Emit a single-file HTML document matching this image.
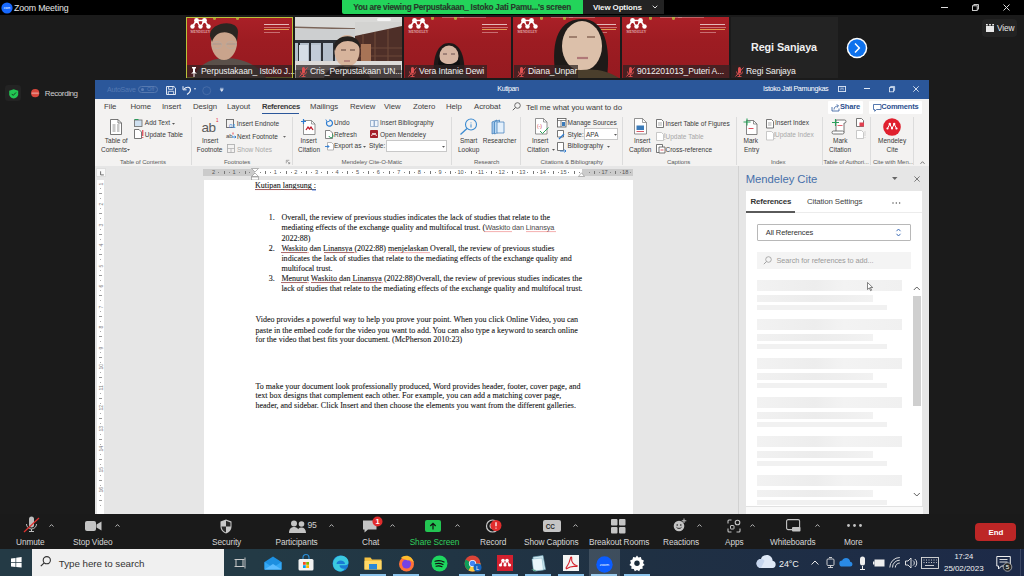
<!DOCTYPE html>
<html><head><meta charset="utf-8">
<style>
*{margin:0;padding:0;box-sizing:border-box}
html,body{width:1024px;height:576px;overflow:hidden;background:#1b1b1b;font-family:"Liberation Sans",sans-serif;position:relative}
.a{position:absolute}
.t{position:absolute;white-space:nowrap}
svg{overflow:visible}
</style></head><body>
<div class="a" style="left:0px;top:0px;width:1024px;height:15px;background:#000;"></div>
<svg class="a" style="left:0.5px;top:1.5px" width="12" height="12" viewBox="0 0 12 12"><circle cx="6" cy="6" r="5.6" fill="#1769ff"/><text x="6" y="7" font-size="2.6" fill="#fff" text-anchor="middle" font-family="Liberation Sans">zoom</text></svg>
<div class="t" style="left:14px;top:2.99px;font-size:8.8px;line-height:10.12px;color:#e6e6e6;letter-spacing:-0.15px">Zoom Meeting</div>
<div class="a" style="left:342px;top:0px;width:241px;height:14px;background:#23d45a;border-radius:0 0 0 2px"></div>
<div class="t" style="left:353.3px;top:3.14px;font-size:8.2px;line-height:9.43px;color:#263a2a;font-weight:bold;letter-spacing:-0.24px;-webkit-text-stroke:0.15px #263a2a">You are viewing Perpustakaan_ Istoko Jati Pamu...'s screen</div>
<div class="a" style="left:583px;top:0px;width:81px;height:14px;background:#232323;"></div>
<div class="t" style="left:593px;top:3.13px;font-size:8px;line-height:9.2px;color:#f2f2f2;font-weight:bold;letter-spacing:-0.15px">View Options</div>
<svg class="a" style="left:652px;top:5px" width="6" height="4" viewBox="0 0 6 4"><path d="M0.7 0.7L3 3 5.3 0.7" fill="none" stroke="#ddd" stroke-width="1"/></svg>
<div class="a" style="left:941px;top:7px;width:7px;height:1px;background:#ddd;"></div>
<svg class="a" style="left:972px;top:4px" width="7" height="7" viewBox="0 0 7 7"><rect x="0.5" y="1.8" width="4.7" height="4.7" fill="none" stroke="#ddd" stroke-width="0.9"/><path d="M1.8 1.8V0.5h4.7v4.7H5.2" fill="none" stroke="#ddd" stroke-width="0.9"/></svg>
<svg class="a" style="left:1003px;top:4px" width="7" height="7" viewBox="0 0 7 7"><path d="M0.5 0.5l6 6M6.5 0.5l-6 6" stroke="#ddd" stroke-width="1"/></svg>
<div class="a" style="left:982px;top:19px;width:35px;height:18px;background:#232323;border-radius:4px"></div>
<svg class="a" style="left:986px;top:23.5px" width="8" height="8" viewBox="0 0 8 8"><rect x="0" y="2" width="8" height="6" fill="#e8e8e8"/><path d="M0 0h1.8v1.5H0zM3.1 0h1.8v1.5H3.1zM6.2 0h1.8v1.5H6.2z" fill="#e8e8e8"/></svg>
<div class="t" style="left:997px;top:23.55px;font-size:8.3px;line-height:9.54px;color:#e8e8e8;letter-spacing:-0.15px">View</div>
<div class="a" style="left:186px;top:17px;width:107px;height:61px;background:linear-gradient(180deg,#aa2027 0%,#9d1c22 40%,#951a20 100%);"></div>
<svg class="a" style="left:189px;top:17.5px" width="23" height="16" viewBox="0 0 23 16"><g fill="#fff"><circle cx="7.5" cy="2.5" r="2.4"/><circle cx="15.5" cy="2.5" r="2.4"/><circle cx="3.5" cy="8.5" r="2.2"/><circle cx="11.5" cy="8.5" r="2.2"/><circle cx="19.5" cy="8.5" r="2.2"/></g><path d="M3.5 8.5L7.5 2.5 11.5 8.5 15.5 2.5 19.5 8.5M7.5 2.5h8" stroke="#fff" stroke-width="1.6" fill="none"/><circle cx="11.5" cy="5" r="1.5" fill="#a81e25"/><text x="11.5" y="15" font-size="3.6" fill="#f4dede" text-anchor="middle" font-family="Liberation Serif">MENDELEY</text></svg>
<div class="a" style="left:213px;top:17px;width:3px;height:2.5px;background:#b8c040;border-radius:0 0 2px 2px;opacity:.8"></div>
<div class="a" style="left:224px;top:17px;width:22px;height:1px;background:#e0a0a0;opacity:.5"></div>
<div class="a" style="left:236px;top:17px;width:3px;height:2.5px;background:#b8c040;border-radius:0 0 2px 2px;opacity:.8"></div>
<div class="a" style="left:242px;top:17px;width:26px;height:1px;background:#e0a0a0;opacity:.5"></div>
<div class="a" style="left:264px;top:24px;width:25px;height:1.2px;background:#f5e0e0;opacity:.8"></div>
<div class="a" style="left:264px;top:27px;width:26px;height:0.8px;background:#f0c0c0;opacity:.5"></div>
<div class="a" style="left:264px;top:29px;width:25px;height:1.2px;background:#f2b85a;opacity:.8"></div>
<div class="a" style="left:264px;top:31.5px;width:16px;height:0.8px;background:#f0c0c0;opacity:.5"></div>
<div class="a" style="left:186px;top:17px;width:107px;height:61px;background:transparent;border:1px solid #b9c23a;box-sizing:border-box"></div>
<svg class="a" style="left:200px;top:18px" width="56" height="60" viewBox="0 0 56 60"><path d="M-6 60 C-2 46 12 40 26 40 C40 40 58 46 66 60z" fill="#5a504a"/><ellipse cx="24" cy="24" rx="13" ry="18" fill="#c9a48c"/><path d="M10 18 C9 4 38 0 38 14 L37 24 C35 12 16 10 12 24z" fill="#2a2622"/><path d="M12 26h10M26 26h11" stroke="#a89890" stroke-width="1.1"/><ellipse cx="17" cy="27" rx="5" ry="3.5" fill="none" stroke="#b8aaa0" stroke-width="0.7"/><ellipse cx="31" cy="27" rx="5" ry="3.5" fill="none" stroke="#b8aaa0" stroke-width="0.7"/></svg>
<div class="a" style="left:187px;top:65px;width:105px;height:13px;background:rgba(45,35,35,.72);"></div>
<svg class="a" style="left:190px;top:67px" width="8" height="10" viewBox="0 0 8 10"><path d="M2 0h4v1l-1 1v3l2 1.5H1L3 5V2L2 1z" fill="#fff"/><path d="M4 6.5V10" stroke="#fff" stroke-width="1"/></svg>
<div class="t" style="left:201px;top:67.28px;font-size:8.6px;line-height:9.89px;color:#f0f0f0;letter-spacing:-0.13px">Perpustakaan_ Istoko J...</div>
<div class="a" style="left:295px;top:17px;width:107px;height:61px;background:#8a8684;"></div>
<div class="a" style="left:295px;top:17px;width:107px;height:13px;background:#d9d9d7;"></div>
<div class="a" style="left:377px;top:18px;width:14px;height:3px;background:#f4f4f4;border-radius:2px"></div>
<svg class="a" style="left:295px;top:25px" width="75" height="5" viewBox="0 0 75 5"><path d="M0 1.5L75 3.5v1.5L0 3z" fill="#7a6458"/></svg>
<div class="a" style="left:295px;top:29px;width:70px;height:12px;background:#cdcfd0;"></div>
<div class="a" style="left:295px;top:40px;width:70px;height:22px;background:#b4bfcb;"></div>
<div class="a" style="left:295px;top:40px;width:70px;height:3px;background:#2c3036;"></div>
<div class="a" style="left:298px;top:40px;width:2.2px;height:22px;background:#2c3036;"></div>
<div class="a" style="left:309px;top:40px;width:2.2px;height:22px;background:#2c3036;"></div>
<div class="a" style="left:321px;top:40px;width:2.2px;height:22px;background:#2c3036;"></div>
<div class="a" style="left:333px;top:40px;width:2.2px;height:22px;background:#2c3036;"></div>
<div class="a" style="left:347px;top:40px;width:2.2px;height:22px;background:#2c3036;"></div>
<div class="a" style="left:361px;top:40px;width:2.2px;height:22px;background:#2c3036;"></div>
<div class="a" style="left:299px;top:45px;width:9px;height:16px;background:#d5dde6;"></div>
<div class="a" style="left:311px;top:45px;width:9px;height:16px;background:#c3ccd8;"></div>
<div class="a" style="left:355px;top:22px;width:47px;height:41px;background:#d3d3d1;"></div>
<svg class="a" style="left:355px;top:26px" width="47" height="37" viewBox="0 0 47 37"><path d="M0 10L47 0V37H0z" fill="#4e2f28"/><path d="M8 8.5V37M20 6V37M33 3V37M0 22h47M0 30h47" stroke="#6c4838" stroke-width="1.2"/></svg>
<div class="a" style="left:361px;top:44px;width:10px;height:18px;background:#a87456;"></div>
<div class="a" style="left:295px;top:61px;width:107px;height:9px;background:#dcdad8;"></div>
<svg class="a" style="left:328px;top:29px" width="40" height="49" viewBox="0 0 40 49"><path d="M-4 49 C-2 40 8 37 19 37 C30 37 40 40 42 49z" fill="#34302c"/><ellipse cx="19" cy="22" rx="12.5" ry="16" fill="#d7b49c"/><path d="M6 20 C4 4 34 2 32 20 C30 10 10 8 7 22z" fill="#262220"/><path d="M13 21h5M22 21h5" stroke="#5a4038" stroke-width="1.2"/><path d="M16 32h6" stroke="#a87070" stroke-width="1.3"/></svg>
<div class="a" style="left:296px;top:65px;width:105px;height:13px;background:rgba(45,35,35,.72);"></div>
<svg class="a" style="left:299px;top:67px" width="9" height="10" viewBox="0 0 9 10"><path d="M3 1.5a1.5 1.5 0 0 1 3 0v3.5a1.5 1.5 0 0 1-3 0z" fill="#e05050"/><path d="M1.5 4.5a3 3 0 0 0 6 0M4.5 7.5V9.5M2.5 9.5h4" fill="none" stroke="#e05050" stroke-width="0.9"/><path d="M0.5 9.5L8.5 0.5" stroke="#e05050" stroke-width="1"/></svg>
<div class="t" style="left:310px;top:67.28px;font-size:8.6px;line-height:9.89px;color:#f0f0f0;letter-spacing:-0.13px">Cris_Perpustakaan UN...</div>
<div class="a" style="left:404px;top:17px;width:107px;height:61px;background:linear-gradient(180deg,#aa2027 0%,#9d1c22 40%,#951a20 100%);"></div>
<svg class="a" style="left:407px;top:17.5px" width="23" height="16" viewBox="0 0 23 16"><g fill="#fff"><circle cx="7.5" cy="2.5" r="2.4"/><circle cx="15.5" cy="2.5" r="2.4"/><circle cx="3.5" cy="8.5" r="2.2"/><circle cx="11.5" cy="8.5" r="2.2"/><circle cx="19.5" cy="8.5" r="2.2"/></g><path d="M3.5 8.5L7.5 2.5 11.5 8.5 15.5 2.5 19.5 8.5M7.5 2.5h8" stroke="#fff" stroke-width="1.6" fill="none"/><circle cx="11.5" cy="5" r="1.5" fill="#a81e25"/><text x="11.5" y="15" font-size="3.6" fill="#f4dede" text-anchor="middle" font-family="Liberation Serif">MENDELEY</text></svg>
<div class="a" style="left:431px;top:17px;width:3px;height:2.5px;background:#b8c040;border-radius:0 0 2px 2px;opacity:.8"></div>
<div class="a" style="left:442px;top:17px;width:22px;height:1px;background:#e0a0a0;opacity:.5"></div>
<div class="a" style="left:454px;top:17px;width:3px;height:2.5px;background:#b8c040;border-radius:0 0 2px 2px;opacity:.8"></div>
<div class="a" style="left:460px;top:17px;width:26px;height:1px;background:#e0a0a0;opacity:.5"></div>
<div class="a" style="left:482px;top:24px;width:25px;height:1.2px;background:#f5e0e0;opacity:.8"></div>
<div class="a" style="left:482px;top:27px;width:26px;height:0.8px;background:#f0c0c0;opacity:.5"></div>
<div class="a" style="left:482px;top:29px;width:25px;height:1.2px;background:#f2b85a;opacity:.8"></div>
<div class="a" style="left:482px;top:31.5px;width:16px;height:0.8px;background:#f0c0c0;opacity:.5"></div>
<svg class="a" style="left:431px;top:42px" width="36" height="36" viewBox="0 0 36 36"><path d="M3 36 C1 14 7 1 18 1 C29 1 35 14 33 36z" fill="#1e1818"/><ellipse cx="18" cy="14" rx="9.5" ry="10.5" fill="#d6b5a2"/><path d="M12 12h4M20 12h4" stroke="#6a5050" stroke-width="1"/><path d="M8 16 C11 24 25 24 28 16 L29 22 C23 28 13 28 7 22z" fill="#101010"/><path d="M-3 36 C3 29 10 27 18 27 C26 27 33 29 39 36z" fill="#4a4444"/></svg>
<div class="a" style="left:405px;top:65px;width:82px;height:13px;background:rgba(45,35,35,.72);"></div>
<svg class="a" style="left:408px;top:67px" width="9" height="10" viewBox="0 0 9 10"><path d="M3 1.5a1.5 1.5 0 0 1 3 0v3.5a1.5 1.5 0 0 1-3 0z" fill="#e05050"/><path d="M1.5 4.5a3 3 0 0 0 6 0M4.5 7.5V9.5M2.5 9.5h4" fill="none" stroke="#e05050" stroke-width="0.9"/><path d="M0.5 9.5L8.5 0.5" stroke="#e05050" stroke-width="1"/></svg>
<div class="t" style="left:419px;top:67.28px;font-size:8.6px;line-height:9.89px;color:#f0f0f0;letter-spacing:-0.13px">Vera Intanie Dewi</div>
<div class="a" style="left:513px;top:17px;width:107px;height:61px;background:linear-gradient(180deg,#aa2027 0%,#9d1c22 40%,#951a20 100%);"></div>
<svg class="a" style="left:516px;top:17.5px" width="23" height="16" viewBox="0 0 23 16"><g fill="#fff"><circle cx="7.5" cy="2.5" r="2.4"/><circle cx="15.5" cy="2.5" r="2.4"/><circle cx="3.5" cy="8.5" r="2.2"/><circle cx="11.5" cy="8.5" r="2.2"/><circle cx="19.5" cy="8.5" r="2.2"/></g><path d="M3.5 8.5L7.5 2.5 11.5 8.5 15.5 2.5 19.5 8.5M7.5 2.5h8" stroke="#fff" stroke-width="1.6" fill="none"/><circle cx="11.5" cy="5" r="1.5" fill="#a81e25"/><text x="11.5" y="15" font-size="3.6" fill="#f4dede" text-anchor="middle" font-family="Liberation Serif">MENDELEY</text></svg>
<div class="a" style="left:540px;top:17px;width:3px;height:2.5px;background:#b8c040;border-radius:0 0 2px 2px;opacity:.8"></div>
<div class="a" style="left:551px;top:17px;width:22px;height:1px;background:#e0a0a0;opacity:.5"></div>
<div class="a" style="left:563px;top:17px;width:3px;height:2.5px;background:#b8c040;border-radius:0 0 2px 2px;opacity:.8"></div>
<div class="a" style="left:569px;top:17px;width:26px;height:1px;background:#e0a0a0;opacity:.5"></div>
<div class="a" style="left:591px;top:24px;width:25px;height:1.2px;background:#f5e0e0;opacity:.8"></div>
<div class="a" style="left:591px;top:27px;width:26px;height:0.8px;background:#f0c0c0;opacity:.5"></div>
<div class="a" style="left:591px;top:29px;width:25px;height:1.2px;background:#f2b85a;opacity:.8"></div>
<div class="a" style="left:591px;top:31.5px;width:16px;height:0.8px;background:#f0c0c0;opacity:.5"></div>
<svg class="a" style="left:553px;top:17px" width="60" height="61" viewBox="0 0 60 61"><path d="M3 61 C-2 30 2 3 28 2 C52 1 58 30 54 61z" fill="#1e1a18"/><ellipse cx="29" cy="29" rx="20" ry="25" fill="#dcc0aa"/><path d="M16 20h8M34 20h8" stroke="#8a6a5a" stroke-width="1.3"/><path d="M24 41h11" stroke="#b07878" stroke-width="2.2"/><path d="M-8 61 C0 54 12 51 28 53 C42 51 56 54 66 61z" fill="#4a3e2c"/></svg>
<div class="a" style="left:514px;top:65px;width:64px;height:13px;background:rgba(45,35,35,.72);"></div>
<svg class="a" style="left:517px;top:67px" width="9" height="10" viewBox="0 0 9 10"><path d="M3 1.5a1.5 1.5 0 0 1 3 0v3.5a1.5 1.5 0 0 1-3 0z" fill="#e05050"/><path d="M1.5 4.5a3 3 0 0 0 6 0M4.5 7.5V9.5M2.5 9.5h4" fill="none" stroke="#e05050" stroke-width="0.9"/><path d="M0.5 9.5L8.5 0.5" stroke="#e05050" stroke-width="1"/></svg>
<div class="t" style="left:528px;top:67.28px;font-size:8.6px;line-height:9.89px;color:#f0f0f0;letter-spacing:-0.13px">Diana_Unpar</div>
<div class="a" style="left:622px;top:17px;width:107px;height:61px;background:linear-gradient(180deg,#aa2027 0%,#9d1c22 40%,#951a20 100%);"></div>
<svg class="a" style="left:625px;top:17.5px" width="23" height="16" viewBox="0 0 23 16"><g fill="#fff"><circle cx="7.5" cy="2.5" r="2.4"/><circle cx="15.5" cy="2.5" r="2.4"/><circle cx="3.5" cy="8.5" r="2.2"/><circle cx="11.5" cy="8.5" r="2.2"/><circle cx="19.5" cy="8.5" r="2.2"/></g><path d="M3.5 8.5L7.5 2.5 11.5 8.5 15.5 2.5 19.5 8.5M7.5 2.5h8" stroke="#fff" stroke-width="1.6" fill="none"/><circle cx="11.5" cy="5" r="1.5" fill="#a81e25"/><text x="11.5" y="15" font-size="3.6" fill="#f4dede" text-anchor="middle" font-family="Liberation Serif">MENDELEY</text></svg>
<div class="a" style="left:649px;top:17px;width:3px;height:2.5px;background:#b8c040;border-radius:0 0 2px 2px;opacity:.8"></div>
<div class="a" style="left:660px;top:17px;width:22px;height:1px;background:#e0a0a0;opacity:.5"></div>
<div class="a" style="left:672px;top:17px;width:3px;height:2.5px;background:#b8c040;border-radius:0 0 2px 2px;opacity:.8"></div>
<div class="a" style="left:678px;top:17px;width:26px;height:1px;background:#e0a0a0;opacity:.5"></div>
<div class="a" style="left:700px;top:24px;width:25px;height:1.2px;background:#f5e0e0;opacity:.8"></div>
<div class="a" style="left:700px;top:27px;width:26px;height:0.8px;background:#f0c0c0;opacity:.5"></div>
<div class="a" style="left:700px;top:29px;width:25px;height:1.2px;background:#f2b85a;opacity:.8"></div>
<div class="a" style="left:700px;top:31.5px;width:16px;height:0.8px;background:#f0c0c0;opacity:.5"></div>
<div class="a" style="left:623px;top:65px;width:107px;height:13px;background:rgba(45,35,35,.72);"></div>
<svg class="a" style="left:626px;top:67px" width="9" height="10" viewBox="0 0 9 10"><path d="M3 1.5a1.5 1.5 0 0 1 3 0v3.5a1.5 1.5 0 0 1-3 0z" fill="#e05050"/><path d="M1.5 4.5a3 3 0 0 0 6 0M4.5 7.5V9.5M2.5 9.5h4" fill="none" stroke="#e05050" stroke-width="0.9"/><path d="M0.5 9.5L8.5 0.5" stroke="#e05050" stroke-width="1"/></svg>
<div class="t" style="left:637px;top:67.28px;font-size:8.6px;line-height:9.89px;color:#f0f0f0;letter-spacing:-0.13px">9012201013_Puteri A...</div>
<div class="a" style="left:731px;top:17px;width:107px;height:61px;background:#232323;"></div>
<div class="t" style="left:751px;top:41.35px;font-size:10.8px;line-height:12.42px;color:#f0f0f0;font-weight:bold;letter-spacing:-0.1px">Regi Sanjaya</div>
<div class="a" style="left:732px;top:65px;width:64px;height:13px;background:rgba(45,35,35,.72);"></div>
<svg class="a" style="left:735px;top:67px" width="9" height="10" viewBox="0 0 9 10"><path d="M3 1.5a1.5 1.5 0 0 1 3 0v3.5a1.5 1.5 0 0 1-3 0z" fill="#e05050"/><path d="M1.5 4.5a3 3 0 0 0 6 0M4.5 7.5V9.5M2.5 9.5h4" fill="none" stroke="#e05050" stroke-width="0.9"/><path d="M0.5 9.5L8.5 0.5" stroke="#e05050" stroke-width="1"/></svg>
<div class="t" style="left:746px;top:67.28px;font-size:8.6px;line-height:9.89px;color:#f0f0f0;letter-spacing:-0.13px">Regi Sanjaya</div>
<svg class="a" style="left:846px;top:37px" width="22" height="22" viewBox="0 0 22 22"><circle cx="11" cy="11" r="10.3" fill="#fff"/><circle cx="11" cy="11" r="8.8" fill="#0e72ed"/><path d="M9 6.5L13.3 11 9 15.5" fill="none" stroke="#fff" stroke-width="1.5"/></svg>
<div class="a" style="left:5.3px;top:85.3px;width:15.8px;height:15.8px;background:#232323;border-radius:3px"></div>
<svg class="a" style="left:8.8px;top:88.6px" width="9.4" height="9.6" viewBox="0 0 9.4 9.6"><path d="M4.7 0.2L9.2 1.8v3.4c0 2.3-1.8 3.7-4.5 4.3C2 8.9 0.2 7.5 0.2 5.2V1.8z" fill="#22c553"/><path d="M2.7 4.9l1.5 1.5 2.8-2.9" fill="none" stroke="#1a3a22" stroke-width="1"/></svg>
<svg class="a" style="left:30.5px;top:89.4px" width="8.4" height="8.4" viewBox="0 0 8.4 8.4"><circle cx="4.2" cy="4.2" r="4.1" fill="#d8473c"/><rect x="0.6" y="3.4" width="7.2" height="1.7" fill="#f0b8b0" opacity="0.6"/></svg>
<div class="t" style="left:44.8px;top:89.03px;font-size:8px;line-height:9.2px;color:#d0d0d0;letter-spacing:-0.4px">Recording</div>
<div class="a" style="left:95px;top:80px;width:834px;height:434px;background:#e6e6e6;"></div>
<div class="a" style="left:95px;top:80px;width:834px;height:18.5px;background:#2b579a;"></div>
<div class="t" style="left:107px;top:85.55px;font-size:7px;line-height:8.05px;color:#557ab3;letter-spacing:-0.2px">AutoSave</div>
<div class="a" style="left:137.5px;top:85.5px;width:20px;height:7.5px;background:transparent;border:0.8px solid #5679b0;border-radius:4px"></div>
<div class="a" style="left:140.5px;top:87.8px;width:3px;height:3px;background:#5a7db5;border-radius:2px"></div>
<div class="t" style="left:147px;top:86.43px;font-size:5.5px;line-height:6.32px;color:#5a7db5">Off</div>
<svg class="a" style="left:165.5px;top:85.5px" width="10" height="9" viewBox="0 0 10 9"><path d="M0.5 0.5h7.4l1.6 1.6v6.4H0.5z" fill="none" stroke="#e8eef8" stroke-width="0.95"/><path d="M2.6 0.5v2.8h4.3V0.5M2.3 8.5V5.3h5.4v3.2" fill="none" stroke="#e8eef8" stroke-width="0.85"/></svg>
<svg class="a" style="left:182px;top:85px" width="15" height="10" viewBox="0 0 15 10"><path d="M2 4 C4.5 1.2 8.5 1.8 8.5 4.8 C8.5 7 6.8 8.4 5 9.5" fill="none" stroke="#eef2fa" stroke-width="1.1"/><path d="M1 1.2v3.6h3.6" fill="none" stroke="#eef2fa" stroke-width="1"/><path d="M12 3.8h2" stroke="#eef2fa" stroke-width="0.9"/></svg>
<svg class="a" style="left:201.5px;top:85.5px" width="10" height="9" viewBox="0 0 10 9"><circle cx="4.7" cy="4.7" r="4" fill="none" stroke="#4a6ea8" stroke-width="0.9"/></svg>
<svg class="a" style="left:219.5px;top:88px" width="4" height="4" viewBox="0 0 4 4"><path d="M0 0.3h3.5M0.3 1.6l1.45 1.9 1.45-1.9z" fill="#e8eef8" stroke="#e8eef8" stroke-width="0.6"/></svg>
<div class="t" style="left:497.3px;top:84.66px;font-size:7.1px;line-height:8.16px;color:#fff;letter-spacing:-0.4px">Kutipan</div>
<div class="t" style="left:763px;top:85.37px;font-size:7.2px;line-height:8.28px;color:#fff;letter-spacing:-0.33px">Istoko Jati Pamungkas</div>
<svg class="a" style="left:838.2px;top:85.9px" width="8" height="6" viewBox="0 0 8 6"><rect x="0.45" y="0.45" width="7.1" height="5.1" fill="none" stroke="#dfe8f6" stroke-width="0.9"/><path d="M2.3 2.2h3.4M2.3 3.7h1.2M4.5 3.7h1.2" stroke="#dfe8f6" stroke-width="0.7"/></svg>
<div class="a" style="left:864px;top:88px;width:6px;height:0.9px;background:#dfe8f6;"></div>
<svg class="a" style="left:889px;top:86px" width="6" height="6.2" viewBox="0 0 6 6.2"><rect x="0.45" y="1.6" width="4.2" height="4.2" fill="none" stroke="#dfe8f6" stroke-width="0.85"/><path d="M1.6 1.6V0.45h4v4H4.65" fill="none" stroke="#dfe8f6" stroke-width="0.85"/></svg>
<svg class="a" style="left:913.3px;top:86.2px" width="6" height="6" viewBox="0 0 6 6"><path d="M0.3 0.3l5.4 5.4M5.7 0.3l-5.4 5.4" stroke="#dfe8f6" stroke-width="0.9"/></svg>
<div class="a" style="left:95px;top:98.5px;width:834px;height:67.5px;background:#f3f2f1;"></div>
<div class="t" style="left:104px;top:102.61px;font-size:7.8px;line-height:8.97px;color:#404040;letter-spacing:-0.05px">File</div>
<div class="t" style="left:130.5px;top:102.61px;font-size:7.8px;line-height:8.97px;color:#404040;letter-spacing:-0.05px">Home</div>
<div class="t" style="left:162px;top:102.61px;font-size:7.8px;line-height:8.97px;color:#404040;letter-spacing:-0.05px">Insert</div>
<div class="t" style="left:193px;top:102.61px;font-size:7.8px;line-height:8.97px;color:#404040;letter-spacing:-0.05px">Design</div>
<div class="t" style="left:227px;top:102.61px;font-size:7.8px;line-height:8.97px;color:#404040;letter-spacing:-0.05px">Layout</div>
<div class="t" style="left:310px;top:102.61px;font-size:7.8px;line-height:8.97px;color:#404040;letter-spacing:-0.05px">Mailings</div>
<div class="t" style="left:350px;top:102.61px;font-size:7.8px;line-height:8.97px;color:#404040;letter-spacing:-0.05px">Review</div>
<div class="t" style="left:384px;top:102.61px;font-size:7.8px;line-height:8.97px;color:#404040;letter-spacing:-0.05px">View</div>
<div class="t" style="left:413px;top:102.61px;font-size:7.8px;line-height:8.97px;color:#404040;letter-spacing:-0.05px">Zotero</div>
<div class="t" style="left:446px;top:102.61px;font-size:7.8px;line-height:8.97px;color:#404040;letter-spacing:-0.05px">Help</div>
<div class="t" style="left:474px;top:102.61px;font-size:7.8px;line-height:8.97px;color:#404040;letter-spacing:-0.05px">Acrobat</div>
<div class="t" style="left:262px;top:102.80px;font-size:7.6px;line-height:8.74px;color:#383838;font-weight:bold;letter-spacing:-0.3px">References</div>
<div class="a" style="left:262px;top:112.6px;width:37px;height:1.6px;background:#2b579a;"></div>
<svg class="a" style="left:512px;top:102px" width="9" height="9" viewBox="0 0 9 9"><circle cx="5.5" cy="3.5" r="2.8" fill="none" stroke="#555" stroke-width="0.85"/><path d="M3.5 5.5L0.8 8.2" stroke="#555" stroke-width="0.95"/></svg>
<div class="t" style="left:526px;top:102.52px;font-size:7.9px;line-height:9.08px;color:#404040;letter-spacing:-0.05px">Tell me what you want to do</div>
<div class="a" style="left:827.5px;top:100.5px;width:35.5px;height:13px;background:#fff;border-radius:1px"></div>
<svg class="a" style="left:830.5px;top:103px" width="9" height="9" viewBox="0 0 9 9"><path d="M1 4v4h7V5.5" fill="none" stroke="#2b579a" stroke-width="0.8"/><path d="M3 6.5C3 4 5 3 7.2 3M5.8 1.3L7.5 3 5.8 4.7" fill="none" stroke="#2b579a" stroke-width="0.8"/></svg>
<div class="t" style="left:840px;top:103.09px;font-size:7.5px;line-height:8.62px;color:#2b4f8f;font-weight:bold;letter-spacing:-0.15px">Share</div>
<div class="a" style="left:869px;top:100.5px;width:53px;height:13px;background:#fff;border-radius:1px"></div>
<svg class="a" style="left:872.5px;top:103.5px" width="9" height="8" viewBox="0 0 9 8"><path d="M0.5 0.5h7.5v5H3.5L1.7 7.3V5.5H0.5z" fill="none" stroke="#2b579a" stroke-width="0.8"/></svg>
<div class="t" style="left:881.3px;top:103.09px;font-size:7.5px;line-height:8.62px;color:#2b4f8f;font-weight:bold;letter-spacing:-0.2px">Comments</div>
<svg class="a" style="left:109.5px;top:118.5px" width="12" height="16" viewBox="0 0 12 16"><path d="M0.5 0.5h7.5l3.5 3.5v11.5H0.5z" fill="#fff" stroke="#666" stroke-width="0.9"/><path d="M8 0.5v3.5h3.5" fill="none" stroke="#666" stroke-width="0.8"/><path d="M2.5 6h3M7 6h2.5M2.5 8h3M7 8h2.5M2.5 10h3M7 10h2.5M2.5 12h3M7 12h2.5" stroke="#777" stroke-width="0.8"/></svg>
<div class="t" style="left:104.8px;top:137.01px;font-size:6.5px;line-height:7.47px;color:#3a3a3a">Table of</div>
<div class="t" style="left:101px;top:145.51px;font-size:6.5px;line-height:7.47px;color:#3a3a3a">Contents</div>
<svg class="a" style="left:127.3px;top:149px" width="3" height="2" viewBox="0 0 3 2"><path d="M0 0h3L1.5 1.8z" fill="#555"/></svg>
<svg class="a" style="left:134px;top:118px" width="9" height="9" viewBox="0 0 9 9"><rect x="0.5" y="2" width="7.5" height="6.5" fill="#cfe0f0" stroke="#666" stroke-width="0.8"/><path d="M0.5 1.5h4" stroke="#2a9a5a" stroke-width="1"/></svg>
<div class="t" style="left:144.8px;top:118.71px;font-size:6.5px;line-height:7.47px;color:#3a3a3a">Add Text</div>
<svg class="a" style="left:172px;top:122.5px" width="3" height="2" viewBox="0 0 3 2"><path d="M0 0h3L1.5 1.8z" fill="#555"/></svg>
<svg class="a" style="left:134px;top:129px" width="10" height="10" viewBox="0 0 10 10"><path d="M0.5 0.5h4.5l2.5 2.5v6.5H0.5z" fill="#fff" stroke="#555" stroke-width="0.8"/><path d="M8.8 1v6M8.8 8v1" stroke="#e02030" stroke-width="1"/></svg>
<div class="t" style="left:144.8px;top:130.51px;font-size:6.5px;line-height:7.47px;color:#3a3a3a">Update Table</div>
<div class="t" style="left:120px;top:158.77px;font-size:6px;line-height:6.9px;color:#5a5a5a;letter-spacing:-0.05px">Table of Contents</div>
<div class="a" style="left:191px;top:117px;width:1px;height:48px;background:#dcdcdc;"></div>
<div class="t" style="left:201.5px;top:119.56px;font-size:13.5px;line-height:15.52px;color:#5a5a5a;letter-spacing:-0.4px">ab</div>
<div class="t" style="left:216px;top:117.86px;font-size:4.5px;line-height:5.17px;color:#e02030">1</div>
<div class="t" style="left:202px;top:136.81px;font-size:6.5px;line-height:7.47px;color:#3a3a3a">Insert</div>
<div class="t" style="left:196.8px;top:145.61px;font-size:6.5px;line-height:7.47px;color:#3a3a3a">Footnote</div>
<svg class="a" style="left:226px;top:119px" width="10" height="10" viewBox="0 0 10 10"><rect x="0.5" y="0.5" width="7" height="8" fill="none" stroke="#555" stroke-width="0.8"/><text x="3" y="8.5" font-size="6" fill="#2b7bd0" font-family="Liberation Sans">01</text></svg>
<div class="t" style="left:236.8px;top:119.71px;font-size:6.5px;line-height:7.47px;color:#3a3a3a">Insert Endnote</div>
<div class="t" style="left:226px;top:133.37px;font-size:6px;line-height:6.9px;color:#444">ab</div>
<svg class="a" style="left:232px;top:132px" width="5" height="8" viewBox="0 0 5 8"><path d="M1 0.5v2" stroke="#e02030" stroke-width="0.8"/><path d="M0 5h4M2.8 3.8L4 5 2.8 6.2" fill="none" stroke="#2b7bd0" stroke-width="0.9"/></svg>
<div class="t" style="left:237px;top:132.91px;font-size:6.5px;line-height:7.47px;color:#3a3a3a">Next Footnote</div>
<svg class="a" style="left:282.5px;top:136px" width="3" height="2" viewBox="0 0 3 2"><path d="M0 0h3L1.5 1.8z" fill="#666"/></svg>
<svg class="a" style="left:227px;top:144px" width="8" height="9" viewBox="0 0 8 9"><rect x="0.5" y="0.5" width="7" height="8" fill="none" stroke="#aaa" stroke-width="0.8"/><path d="M0.5 4.5h7M4 4.5v4" stroke="#aaa" stroke-width="0.7"/></svg>
<div class="t" style="left:237px;top:145.61px;font-size:6.5px;line-height:7.47px;color:#a8a8a8">Show Notes</div>
<div class="t" style="left:224px;top:158.77px;font-size:6px;line-height:6.9px;color:#5a5a5a;letter-spacing:-0.05px">Footnotes</div>
<svg class="a" style="left:285.5px;top:160px" width="4" height="4" viewBox="0 0 4 4"><path d="M0.3 0.3h3M0.3 0.3v3M1.2 1.2l2.5 2.5M3.7 2v1.7H2" fill="none" stroke="#777" stroke-width="0.6"/></svg>
<div class="a" style="left:292px;top:117px;width:1px;height:48px;background:#dcdcdc;"></div>
<svg class="a" style="left:300px;top:117.5px" width="18" height="17" viewBox="0 0 18 17"><path d="M3.5 2.5h8l3.5 3.5v10.5H3.5z" fill="#fff" stroke="#777" stroke-width="0.8"/><path d="M11.5 2.5V6H15" fill="none" stroke="#777" stroke-width="0.7"/><path d="M1 3.5h5M3.5 1v5" stroke="#2b7bd0" stroke-width="1.2"/><path d="M6 12l2-3 1.5 2 1.5-2 2 3" fill="none" stroke="#c01a2a" stroke-width="1.3"/></svg>
<div class="t" style="left:300.5px;top:136.81px;font-size:6.5px;line-height:7.47px;color:#3a3a3a">Insert</div>
<div class="t" style="left:298px;top:145.61px;font-size:6.5px;line-height:7.47px;color:#3a3a3a">Citation</div>
<svg class="a" style="left:325px;top:118.5px" width="8" height="8" viewBox="0 0 8 8"><path d="M2 2.5 A3 3 0 1 0 4.2 1.2" fill="none" stroke="#2b7bd0" stroke-width="1.2"/><path d="M0.8 0.5l1.5 2.5 2.5-1" fill="none" stroke="#2b7bd0" stroke-width="0.9"/></svg>
<div class="t" style="left:334px;top:118.71px;font-size:6.5px;line-height:7.47px;color:#3a3a3a">Undo</div>
<svg class="a" style="left:325px;top:129.5px" width="9" height="9" viewBox="0 0 9 9"><path d="M0.5 0.5h4.5l2.5 2.5v5.5H0.5z" fill="#fff" stroke="#666" stroke-width="0.8"/><path d="M4 6 a2 2 0 1 0 3-2" fill="none" stroke="#2aa05a" stroke-width="1"/></svg>
<div class="t" style="left:334px;top:130.51px;font-size:6.5px;line-height:7.47px;color:#3a3a3a">Refresh</div>
<svg class="a" style="left:325px;top:141.5px" width="9" height="9" viewBox="0 0 9 9"><path d="M2.5 0.5h4l2 2v5.5h-6z" fill="#fff" stroke="#999" stroke-width="0.7"/><path d="M0 4.5h4M2.5 3L4 4.5 2.5 6" fill="none" stroke="#2b7bd0" stroke-width="0.9"/></svg>
<div class="t" style="left:334px;top:142.31px;font-size:6.5px;line-height:7.47px;color:#3a3a3a">Export as</div>
<svg class="a" style="left:362.5px;top:146px" width="3" height="2" viewBox="0 0 3 2"><path d="M0 0h3L1.5 1.8z" fill="#555"/></svg>
<svg class="a" style="left:370px;top:118.5px" width="9" height="8" viewBox="0 0 9 8"><path d="M0.5 1.5h3.7v6H0.5zM4.3 1.5h3.7v6H4.3z" fill="#eef4fb" stroke="#7a9ac0" stroke-width="0.7"/></svg>
<div class="t" style="left:380px;top:118.71px;font-size:6.5px;line-height:7.47px;color:#3a3a3a">Insert Bibliography</div>
<svg class="a" style="left:370px;top:130px" width="8" height="8" viewBox="0 0 8 8"><rect x="0" y="0" width="8" height="8" rx="0.8" fill="#a51f2a"/><path d="M1.5 6l1.5-3 1 2 1-2 1.5 3" fill="none" stroke="#fff" stroke-width="0.9"/></svg>
<div class="t" style="left:380px;top:130.51px;font-size:6.5px;line-height:7.47px;color:#3a3a3a">Open Mendeley</div>
<div class="t" style="left:369px;top:142.31px;font-size:6.5px;line-height:7.47px;color:#3a3a3a">Style:</div>
<div class="a" style="left:386px;top:140px;width:61px;height:12px;background:#fff;border:0.8px solid #c8c8c8"></div>
<svg class="a" style="left:442px;top:145.5px" width="3" height="2" viewBox="0 0 3 2"><path d="M0 0h3L1.5 1.8z" fill="#555"/></svg>
<div class="t" style="left:341.6px;top:158.77px;font-size:6px;line-height:6.9px;color:#5a5a5a;letter-spacing:-0.05px">Mendeley Cite-O-Matic</div>
<div class="a" style="left:451px;top:117px;width:1px;height:48px;background:#dcdcdc;"></div>
<svg class="a" style="left:459px;top:117.5px" width="19" height="17" viewBox="0 0 19 17"><circle cx="12" cy="6.5" r="5.5" fill="none" stroke="#3a8ad0" stroke-width="1.1"/><path d="M12 4.5v0.8M12 6.3v3.2" stroke="#3a8ad0" stroke-width="1"/><path d="M8 10.5L1.5 16.5" stroke="#3a8ad0" stroke-width="1.3"/></svg>
<div class="t" style="left:460px;top:136.81px;font-size:6.5px;line-height:7.47px;color:#3a3a3a">Smart</div>
<div class="t" style="left:458px;top:145.61px;font-size:6.5px;line-height:7.47px;color:#3a3a3a">Lookup</div>
<svg class="a" style="left:491px;top:119px" width="14" height="15" viewBox="0 0 14 15"><path d="M1 3l5-2v12l-5 2z" fill="#9cc4ea" stroke="#3a7ab8" stroke-width="0.7"/><path d="M3.5 3l5-2v12l-5 2z" fill="#bcdaf4" stroke="#3a7ab8" stroke-width="0.7"/><path d="M6 3h7v11H6z" fill="#e4f0fb" stroke="#3a7ab8" stroke-width="0.7"/></svg>
<div class="t" style="left:482.8px;top:136.81px;font-size:6.5px;line-height:7.47px;color:#3a3a3a">Researcher</div>
<div class="t" style="left:474px;top:158.77px;font-size:6px;line-height:6.9px;color:#5a5a5a;letter-spacing:-0.05px">Research</div>
<div class="a" style="left:520px;top:117px;width:1px;height:48px;background:#dcdcdc;"></div>
<svg class="a" style="left:532.5px;top:118px" width="17" height="17" viewBox="0 0 17 17"><path d="M2.5 0.5h8l3.5 3.5v12H2.5z" fill="#fff" stroke="#777" stroke-width="0.8"/><path d="M10.5 0.5V4H14" fill="none" stroke="#777" stroke-width="0.7"/><text x="4" y="10" font-size="5" fill="#d03040" font-family="Liberation Sans">(-)</text><path d="M7 13l2.5 2.5 6-6" fill="none" stroke="#2aa05a" stroke-width="1"/></svg>
<div class="t" style="left:532px;top:136.81px;font-size:6.5px;line-height:7.47px;color:#3a3a3a">Insert</div>
<div class="t" style="left:527px;top:145.61px;font-size:6.5px;line-height:7.47px;color:#3a3a3a">Citation</div>
<svg class="a" style="left:551.5px;top:149px" width="3" height="2" viewBox="0 0 3 2"><path d="M0 0h3L1.5 1.8z" fill="#555"/></svg>
<svg class="a" style="left:557px;top:118px" width="10" height="10" viewBox="0 0 10 10"><rect x="0.5" y="0.5" width="8.5" height="8.5" fill="#fff" stroke="#555" stroke-width="0.8"/><path d="M0.5 2.5h8.5M4 2.5v6.5" stroke="#555" stroke-width="0.7"/><rect x="5" y="4" width="3" height="4" fill="#3a7ab8"/></svg>
<div class="t" style="left:567.5px;top:118.71px;font-size:6.5px;line-height:7.47px;color:#3a3a3a">Manage Sources</div>
<svg class="a" style="left:557px;top:130px" width="10" height="10" viewBox="0 0 10 10"><path d="M0.5 0.5h6v6.5H0.5z" fill="#fff" stroke="#555" stroke-width="0.8"/><path d="M2 9l5-5" stroke="#2b7bd0" stroke-width="1.2"/></svg>
<div class="t" style="left:567.5px;top:130.51px;font-size:6.5px;line-height:7.47px;color:#3a3a3a">Style:</div>
<div class="a" style="left:584px;top:128px;width:34px;height:12px;background:#fff;border:0.8px solid #c8c8c8"></div>
<div class="t" style="left:586px;top:130.51px;font-size:6.5px;line-height:7.47px;color:#3a3a3a">APA</div>
<svg class="a" style="left:613.5px;top:133.5px" width="3" height="2" viewBox="0 0 3 2"><path d="M0 0h3L1.5 1.8z" fill="#555"/></svg>
<svg class="a" style="left:557px;top:142px" width="10" height="10" viewBox="0 0 10 10"><path d="M0.5 0.5h6v8H0.5z" fill="#fff" stroke="#555" stroke-width="0.8"/><path d="M3 9h6M7.5 7.5L9 9 7.5 10.5" fill="none" stroke="#2b7bd0" stroke-width="0.9"/></svg>
<div class="t" style="left:567.5px;top:142.31px;font-size:6.5px;line-height:7.47px;color:#3a3a3a">Bibliography</div>
<svg class="a" style="left:607px;top:146px" width="3" height="2" viewBox="0 0 3 2"><path d="M0 0h3L1.5 1.8z" fill="#555"/></svg>
<div class="t" style="left:540.5px;top:158.77px;font-size:6px;line-height:6.9px;color:#5a5a5a;letter-spacing:-0.05px">Citations &amp; Bibliography</div>
<div class="a" style="left:622px;top:117px;width:1px;height:48px;background:#dcdcdc;"></div>
<svg class="a" style="left:633.5px;top:118px" width="14" height="17" viewBox="0 0 14 17"><path d="M0.5 0.5h8l4 4v11.5H0.5z" fill="#fff" stroke="#777" stroke-width="0.8"/><path d="M8.5 0.5V4.5h4" fill="none" stroke="#777" stroke-width="0.7"/><rect x="2.5" y="7.5" width="7.5" height="4.5" fill="#3a7ab8"/><path d="M2.5 13.5h7.5" stroke="#d03040" stroke-width="0.8"/></svg>
<div class="t" style="left:634px;top:136.81px;font-size:6.5px;line-height:7.47px;color:#3a3a3a">Insert</div>
<div class="t" style="left:629px;top:145.61px;font-size:6.5px;line-height:7.47px;color:#3a3a3a">Caption</div>
<svg class="a" style="left:656px;top:119px" width="9" height="9" viewBox="0 0 9 9"><path d="M0.5 0.5h5l2 2v6H0.5z" fill="#fff" stroke="#555" stroke-width="0.8"/><path d="M2 4h4M2 6h4" stroke="#777" stroke-width="0.6"/></svg>
<div class="t" style="left:665.5px;top:119.71px;font-size:6.5px;line-height:7.47px;color:#3a3a3a">Insert Table of Figures</div>
<svg class="a" style="left:656px;top:131.5px" width="10" height="9" viewBox="0 0 10 9"><path d="M0.5 0.5h5l2 2v6H0.5z" fill="#fff" stroke="#bbb" stroke-width="0.8"/><path d="M8.8 1v5M8.8 7v1" stroke="#bbb" stroke-width="0.9"/></svg>
<div class="t" style="left:665.5px;top:132.51px;font-size:6.5px;line-height:7.47px;color:#a8a8a8">Update Table</div>
<svg class="a" style="left:656px;top:143.5px" width="10" height="10" viewBox="0 0 10 10"><path d="M0.5 0.5h6v8H0.5z" fill="#fff" stroke="#555" stroke-width="0.8"/><path d="M3 3h6v6H3z" fill="#fff" stroke="#555" stroke-width="0.8"/><path d="M4.5 6h3" stroke="#d03040" stroke-width="0.8"/></svg>
<div class="t" style="left:665.5px;top:145.61px;font-size:6.5px;line-height:7.47px;color:#3a3a3a">Cross-reference</div>
<div class="t" style="left:667px;top:158.77px;font-size:6px;line-height:6.9px;color:#5a5a5a;letter-spacing:-0.05px">Captions</div>
<div class="a" style="left:735.5px;top:117px;width:1px;height:48px;background:#dcdcdc;"></div>
<svg class="a" style="left:742.5px;top:118px" width="16" height="17" viewBox="0 0 16 17"><path d="M3.5 2.5h7l3.5 3.5v10.5H3.5z" fill="#fff" stroke="#666" stroke-width="0.8"/><path d="M10.5 2.5V6H14" fill="none" stroke="#666" stroke-width="0.7"/><path d="M0.5 4h7M4 0.5v7" stroke="#2aa05a" stroke-width="1.1"/><path d="M5.5 10.5h5" stroke="#e05060" stroke-width="1"/></svg>
<div class="t" style="left:743.5px;top:136.81px;font-size:6.5px;line-height:7.47px;color:#3a3a3a">Mark</div>
<div class="t" style="left:744px;top:145.61px;font-size:6.5px;line-height:7.47px;color:#3a3a3a">Entry</div>
<svg class="a" style="left:766px;top:118.5px" width="9" height="10" viewBox="0 0 9 10"><path d="M0.5 0.5h5l2 2v6.5H0.5z" fill="#fff" stroke="#555" stroke-width="0.8"/><path d="M2 4h3.5M2 6h3.5" stroke="#777" stroke-width="0.6"/></svg>
<div class="t" style="left:775px;top:118.71px;font-size:6.5px;line-height:7.47px;color:#3a3a3a">Insert Index</div>
<svg class="a" style="left:766px;top:130.5px" width="10" height="10" viewBox="0 0 10 10"><path d="M0.5 0.5h5l2 2v6.5H0.5z" fill="#fff" stroke="#bbb" stroke-width="0.8"/><path d="M8.8 1v5M8.8 7v1" stroke="#bbb" stroke-width="0.9"/></svg>
<div class="t" style="left:775px;top:130.51px;font-size:6.5px;line-height:7.47px;color:#a8a8a8">Update Index</div>
<div class="t" style="left:771px;top:158.77px;font-size:6px;line-height:6.9px;color:#5a5a5a;letter-spacing:-0.05px">Index</div>
<div class="a" style="left:821.5px;top:117px;width:1px;height:48px;background:#dcdcdc;"></div>
<svg class="a" style="left:830.5px;top:118px" width="18" height="17" viewBox="0 0 18 17"><path d="M5 2h8.5a1.5 1.5 0 0 1 0 3H13v9.5H5z" fill="#fff" stroke="#555" stroke-width="0.8"/><path d="M2.5 13h9a1.5 1.5 0 0 1 0 3h-9a1.5 1.5 0 0 1 0-3z" fill="#fff" stroke="#555" stroke-width="0.8"/><path d="M1 4.5h7M4.5 1v7" stroke="#2aa05a" stroke-width="1.1"/><path d="M6.5 7.5h5" stroke="#e05060" stroke-width="0.9"/></svg>
<div class="t" style="left:833px;top:136.81px;font-size:6.5px;line-height:7.47px;color:#3a3a3a">Mark</div>
<div class="t" style="left:829px;top:145.61px;font-size:6.5px;line-height:7.47px;color:#3a3a3a">Citation</div>
<svg class="a" style="left:856px;top:118px" width="9" height="9" viewBox="0 0 9 9"><path d="M0.5 0.5h5l2 2v6H0.5z" fill="#fff" stroke="#555" stroke-width="0.8"/><rect x="3.5" y="4.5" width="4.5" height="4" fill="#e04050"/></svg>
<svg class="a" style="left:856px;top:129.5px" width="10" height="9" viewBox="0 0 10 9"><path d="M0.5 0.5h5l2 2v6H0.5z" fill="#fff" stroke="#bbb" stroke-width="0.8"/><path d="M9 1v5M9 7v1" stroke="#ccc" stroke-width="0.8"/></svg>
<div class="t" style="left:823.5px;top:158.77px;font-size:6px;line-height:6.9px;color:#5a5a5a;letter-spacing:-0.05px">Table of Authori...</div>
<div class="a" style="left:870px;top:117px;width:1px;height:48px;background:#dcdcdc;"></div>
<svg class="a" style="left:883px;top:117.5px" width="18" height="18" viewBox="0 0 18 18"><circle cx="9" cy="9" r="8.8" fill="#e0202e"/><g fill="#fff"><circle cx="6.8" cy="6" r="1.2"/><circle cx="11.2" cy="6" r="1.2"/><circle cx="4.5" cy="10.5" r="1.1"/><circle cx="9" cy="10.5" r="1.1"/><circle cx="13.5" cy="10.5" r="1.1"/></g><path d="M4.5 10.5L6.8 6 9 10.5 11.2 6 13.5 10.5" fill="none" stroke="#fff" stroke-width="1"/></svg>
<div class="t" style="left:878px;top:136.81px;font-size:6.5px;line-height:7.47px;color:#3a3a3a">Mendeley</div>
<div class="t" style="left:886.5px;top:145.61px;font-size:6.5px;line-height:7.47px;color:#3a3a3a">Cite</div>
<div class="t" style="left:873px;top:158.77px;font-size:6px;line-height:6.9px;color:#5a5a5a;letter-spacing:-0.05px">Cite with Men...</div>
<div class="a" style="left:913px;top:117px;width:1px;height:48px;background:#dcdcdc;"></div>
<svg class="a" style="left:919.5px;top:160.5px" width="5" height="3" viewBox="0 0 5 3"><path d="M0.5 2.8L2.5 0.7 4.5 2.8" fill="none" stroke="#555" stroke-width="0.8"/></svg>
<div class="a" style="left:96px;top:167.6px;width:9.8px;height:9.8px;background:#f9f9f9;border:0.6px solid #dedede"></div>
<svg class="a" style="left:99.5px;top:170.5px" width="5" height="5" viewBox="0 0 5 5"><path d="M0.6 0.3v3.6h3.2" fill="none" stroke="#444" stroke-width="0.75"/></svg>
<div class="a" style="left:96.6px;top:179.5px;width:7.9px;height:334.5px;background:#fff;"></div>
<svg class="a" style="left:97.5px;top:179.5px" width="7" height="6" viewBox="0 0 7 6"><text x="0" y="0" transform="translate(5.3 5.5) rotate(-90)" font-size="5" fill="#777" font-family="Liberation Sans">1</text></svg>
<div class="a" style="left:100px;top:187.6px;width:1px;height:0.7px;background:#aaa;"></div>
<div class="a" style="left:99.2px;top:192.7px;width:2.6px;height:0.6px;background:#9a9a9a;"></div>
<div class="a" style="left:100px;top:197.8px;width:1px;height:0.7px;background:#aaa;"></div>
<svg class="a" style="left:97.5px;top:200.0px" width="7" height="6" viewBox="0 0 7 6"><text x="0" y="0" transform="translate(5.3 5.5) rotate(-90)" font-size="5" fill="#777" font-family="Liberation Sans">2</text></svg>
<div class="a" style="left:100px;top:208.1px;width:1px;height:0.7px;background:#aaa;"></div>
<div class="a" style="left:99.2px;top:213.2px;width:2.6px;height:0.6px;background:#9a9a9a;"></div>
<div class="a" style="left:100px;top:218.3px;width:1px;height:0.7px;background:#aaa;"></div>
<svg class="a" style="left:97.5px;top:220.5px" width="7" height="6" viewBox="0 0 7 6"><text x="0" y="0" transform="translate(5.3 5.5) rotate(-90)" font-size="5" fill="#777" font-family="Liberation Sans">3</text></svg>
<div class="a" style="left:100px;top:228.6px;width:1px;height:0.7px;background:#aaa;"></div>
<div class="a" style="left:99.2px;top:233.7px;width:2.6px;height:0.6px;background:#9a9a9a;"></div>
<div class="a" style="left:100px;top:238.8px;width:1px;height:0.7px;background:#aaa;"></div>
<svg class="a" style="left:97.5px;top:241.0px" width="7" height="6" viewBox="0 0 7 6"><text x="0" y="0" transform="translate(5.3 5.5) rotate(-90)" font-size="5" fill="#777" font-family="Liberation Sans">4</text></svg>
<div class="a" style="left:100px;top:249.1px;width:1px;height:0.7px;background:#aaa;"></div>
<div class="a" style="left:99.2px;top:254.2px;width:2.6px;height:0.6px;background:#9a9a9a;"></div>
<div class="a" style="left:100px;top:259.3px;width:1px;height:0.7px;background:#aaa;"></div>
<svg class="a" style="left:97.5px;top:261.5px" width="7" height="6" viewBox="0 0 7 6"><text x="0" y="0" transform="translate(5.3 5.5) rotate(-90)" font-size="5" fill="#777" font-family="Liberation Sans">5</text></svg>
<div class="a" style="left:100px;top:269.6px;width:1px;height:0.7px;background:#aaa;"></div>
<div class="a" style="left:99.2px;top:274.7px;width:2.6px;height:0.6px;background:#9a9a9a;"></div>
<div class="a" style="left:100px;top:279.8px;width:1px;height:0.7px;background:#aaa;"></div>
<svg class="a" style="left:97.5px;top:282.0px" width="7" height="6" viewBox="0 0 7 6"><text x="0" y="0" transform="translate(5.3 5.5) rotate(-90)" font-size="5" fill="#777" font-family="Liberation Sans">6</text></svg>
<div class="a" style="left:100px;top:290.1px;width:1px;height:0.7px;background:#aaa;"></div>
<div class="a" style="left:99.2px;top:295.2px;width:2.6px;height:0.6px;background:#9a9a9a;"></div>
<div class="a" style="left:100px;top:300.3px;width:1px;height:0.7px;background:#aaa;"></div>
<svg class="a" style="left:97.5px;top:302.5px" width="7" height="6" viewBox="0 0 7 6"><text x="0" y="0" transform="translate(5.3 5.5) rotate(-90)" font-size="5" fill="#777" font-family="Liberation Sans">7</text></svg>
<div class="a" style="left:100px;top:310.6px;width:1px;height:0.7px;background:#aaa;"></div>
<div class="a" style="left:99.2px;top:315.7px;width:2.6px;height:0.6px;background:#9a9a9a;"></div>
<div class="a" style="left:100px;top:320.8px;width:1px;height:0.7px;background:#aaa;"></div>
<svg class="a" style="left:97.5px;top:323.0px" width="7" height="6" viewBox="0 0 7 6"><text x="0" y="0" transform="translate(5.3 5.5) rotate(-90)" font-size="5" fill="#777" font-family="Liberation Sans">8</text></svg>
<div class="a" style="left:100px;top:331.1px;width:1px;height:0.7px;background:#aaa;"></div>
<div class="a" style="left:99.2px;top:336.2px;width:2.6px;height:0.6px;background:#9a9a9a;"></div>
<div class="a" style="left:100px;top:341.3px;width:1px;height:0.7px;background:#aaa;"></div>
<svg class="a" style="left:97.5px;top:343.5px" width="7" height="6" viewBox="0 0 7 6"><text x="0" y="0" transform="translate(5.3 5.5) rotate(-90)" font-size="5" fill="#777" font-family="Liberation Sans">9</text></svg>
<div class="a" style="left:100px;top:351.6px;width:1px;height:0.7px;background:#aaa;"></div>
<div class="a" style="left:99.2px;top:356.7px;width:2.6px;height:0.6px;background:#9a9a9a;"></div>
<div class="a" style="left:100px;top:361.8px;width:1px;height:0.7px;background:#aaa;"></div>
<svg class="a" style="left:97.5px;top:364.0px" width="7" height="6" viewBox="0 0 7 6"><text x="0" y="0" transform="translate(5.3 5.5) rotate(-90)" font-size="5" fill="#777" font-family="Liberation Sans">10</text></svg>
<div class="a" style="left:100px;top:372.1px;width:1px;height:0.7px;background:#aaa;"></div>
<div class="a" style="left:99.2px;top:377.2px;width:2.6px;height:0.6px;background:#9a9a9a;"></div>
<div class="a" style="left:100px;top:382.3px;width:1px;height:0.7px;background:#aaa;"></div>
<svg class="a" style="left:97.5px;top:384.5px" width="7" height="6" viewBox="0 0 7 6"><text x="0" y="0" transform="translate(5.3 5.5) rotate(-90)" font-size="5" fill="#777" font-family="Liberation Sans">11</text></svg>
<div class="a" style="left:100px;top:392.6px;width:1px;height:0.7px;background:#aaa;"></div>
<div class="a" style="left:99.2px;top:397.7px;width:2.6px;height:0.6px;background:#9a9a9a;"></div>
<div class="a" style="left:100px;top:402.8px;width:1px;height:0.7px;background:#aaa;"></div>
<svg class="a" style="left:97.5px;top:405.0px" width="7" height="6" viewBox="0 0 7 6"><text x="0" y="0" transform="translate(5.3 5.5) rotate(-90)" font-size="5" fill="#777" font-family="Liberation Sans">12</text></svg>
<div class="a" style="left:100px;top:413.1px;width:1px;height:0.7px;background:#aaa;"></div>
<div class="a" style="left:99.2px;top:418.2px;width:2.6px;height:0.6px;background:#9a9a9a;"></div>
<div class="a" style="left:100px;top:423.3px;width:1px;height:0.7px;background:#aaa;"></div>
<svg class="a" style="left:97.5px;top:425.5px" width="7" height="6" viewBox="0 0 7 6"><text x="0" y="0" transform="translate(5.3 5.5) rotate(-90)" font-size="5" fill="#777" font-family="Liberation Sans">13</text></svg>
<div class="a" style="left:100px;top:433.6px;width:1px;height:0.7px;background:#aaa;"></div>
<div class="a" style="left:99.2px;top:438.7px;width:2.6px;height:0.6px;background:#9a9a9a;"></div>
<div class="a" style="left:100px;top:443.8px;width:1px;height:0.7px;background:#aaa;"></div>
<svg class="a" style="left:97.5px;top:446.0px" width="7" height="6" viewBox="0 0 7 6"><text x="0" y="0" transform="translate(5.3 5.5) rotate(-90)" font-size="5" fill="#777" font-family="Liberation Sans">14</text></svg>
<div class="a" style="left:100px;top:454.1px;width:1px;height:0.7px;background:#aaa;"></div>
<div class="a" style="left:99.2px;top:459.2px;width:2.6px;height:0.6px;background:#9a9a9a;"></div>
<div class="a" style="left:100px;top:464.3px;width:1px;height:0.7px;background:#aaa;"></div>
<svg class="a" style="left:97.5px;top:466.5px" width="7" height="6" viewBox="0 0 7 6"><text x="0" y="0" transform="translate(5.3 5.5) rotate(-90)" font-size="5" fill="#777" font-family="Liberation Sans">15</text></svg>
<div class="a" style="left:100px;top:474.6px;width:1px;height:0.7px;background:#aaa;"></div>
<div class="a" style="left:99.2px;top:479.7px;width:2.6px;height:0.6px;background:#9a9a9a;"></div>
<div class="a" style="left:100px;top:484.8px;width:1px;height:0.7px;background:#aaa;"></div>
<svg class="a" style="left:97.5px;top:487.0px" width="7" height="6" viewBox="0 0 7 6"><text x="0" y="0" transform="translate(5.3 5.5) rotate(-90)" font-size="5" fill="#777" font-family="Liberation Sans">16</text></svg>
<div class="a" style="left:100px;top:495.1px;width:1px;height:0.7px;background:#aaa;"></div>
<div class="a" style="left:99.2px;top:500.2px;width:2.6px;height:0.6px;background:#9a9a9a;"></div>
<div class="a" style="left:100px;top:505.3px;width:1px;height:0.7px;background:#aaa;"></div>
<div class="a" style="left:203px;top:169px;width:430px;height:6.6px;background:#fff;"></div>
<div class="a" style="left:203px;top:169px;width:52px;height:6.6px;background:#cbcbcb;"></div>
<div class="a" style="left:581.5px;top:169px;width:51.5px;height:6.6px;background:#cbcbcb;"></div>
<div class="t" style="left:212.04000000000002px;top:169.44px;font-size:5.6px;line-height:6.44px;color:#555">2</div>
<div class="a" style="left:218.485px;top:172px;width:1px;height:1px;background:#888;"></div>
<div class="a" style="left:223.93px;top:170.8px;width:0.7px;height:3px;background:#777;"></div>
<div class="a" style="left:228.775px;top:172px;width:1px;height:1px;background:#888;"></div>
<div class="t" style="left:232.62000000000003px;top:169.44px;font-size:5.6px;line-height:6.44px;color:#555">1</div>
<div class="a" style="left:239.06500000000003px;top:172px;width:1px;height:1px;background:#888;"></div>
<div class="a" style="left:244.51000000000002px;top:170.8px;width:0.7px;height:3px;background:#777;"></div>
<div class="a" style="left:249.35500000000002px;top:172px;width:1px;height:1px;background:#888;"></div>
<div class="a" style="left:259.645px;top:172px;width:1px;height:1px;background:#888;"></div>
<div class="a" style="left:265.09000000000003px;top:170.8px;width:0.7px;height:3px;background:#777;"></div>
<div class="a" style="left:269.935px;top:172px;width:1px;height:1px;background:#888;"></div>
<div class="t" style="left:273.78px;top:169.44px;font-size:5.6px;line-height:6.44px;color:#555">1</div>
<div class="a" style="left:280.22499999999997px;top:172px;width:1px;height:1px;background:#888;"></div>
<div class="a" style="left:285.67px;top:170.8px;width:0.7px;height:3px;background:#777;"></div>
<div class="a" style="left:290.515px;top:172px;width:1px;height:1px;background:#888;"></div>
<div class="t" style="left:294.36px;top:169.44px;font-size:5.6px;line-height:6.44px;color:#555">2</div>
<div class="a" style="left:300.805px;top:172px;width:1px;height:1px;background:#888;"></div>
<div class="a" style="left:306.25000000000006px;top:170.8px;width:0.7px;height:3px;background:#777;"></div>
<div class="a" style="left:311.095px;top:172px;width:1px;height:1px;background:#888;"></div>
<div class="t" style="left:314.94px;top:169.44px;font-size:5.6px;line-height:6.44px;color:#555">3</div>
<div class="a" style="left:321.385px;top:172px;width:1px;height:1px;background:#888;"></div>
<div class="a" style="left:326.83000000000004px;top:170.8px;width:0.7px;height:3px;background:#777;"></div>
<div class="a" style="left:331.675px;top:172px;width:1px;height:1px;background:#888;"></div>
<div class="t" style="left:335.52px;top:169.44px;font-size:5.6px;line-height:6.44px;color:#555">4</div>
<div class="a" style="left:341.965px;top:172px;width:1px;height:1px;background:#888;"></div>
<div class="a" style="left:347.41px;top:170.8px;width:0.7px;height:3px;background:#777;"></div>
<div class="a" style="left:352.255px;top:172px;width:1px;height:1px;background:#888;"></div>
<div class="t" style="left:356.09999999999997px;top:169.44px;font-size:5.6px;line-height:6.44px;color:#555">5</div>
<div class="a" style="left:362.54499999999996px;top:172px;width:1px;height:1px;background:#888;"></div>
<div class="a" style="left:367.99px;top:170.8px;width:0.7px;height:3px;background:#777;"></div>
<div class="a" style="left:372.835px;top:172px;width:1px;height:1px;background:#888;"></div>
<div class="t" style="left:376.67999999999995px;top:169.44px;font-size:5.6px;line-height:6.44px;color:#555">6</div>
<div class="a" style="left:383.12499999999994px;top:172px;width:1px;height:1px;background:#888;"></div>
<div class="a" style="left:388.57px;top:170.8px;width:0.7px;height:3px;background:#777;"></div>
<div class="a" style="left:393.41499999999996px;top:172px;width:1px;height:1px;background:#888;"></div>
<div class="t" style="left:397.26px;top:169.44px;font-size:5.6px;line-height:6.44px;color:#555">7</div>
<div class="a" style="left:403.705px;top:172px;width:1px;height:1px;background:#888;"></div>
<div class="a" style="left:409.15000000000003px;top:170.8px;width:0.7px;height:3px;background:#777;"></div>
<div class="a" style="left:413.995px;top:172px;width:1px;height:1px;background:#888;"></div>
<div class="t" style="left:417.84px;top:169.44px;font-size:5.6px;line-height:6.44px;color:#555">8</div>
<div class="a" style="left:424.28499999999997px;top:172px;width:1px;height:1px;background:#888;"></div>
<div class="a" style="left:429.73px;top:170.8px;width:0.7px;height:3px;background:#777;"></div>
<div class="a" style="left:434.575px;top:172px;width:1px;height:1px;background:#888;"></div>
<div class="t" style="left:438.41999999999996px;top:169.44px;font-size:5.6px;line-height:6.44px;color:#555">9</div>
<div class="a" style="left:444.86499999999995px;top:172px;width:1px;height:1px;background:#888;"></div>
<div class="a" style="left:450.31px;top:170.8px;width:0.7px;height:3px;background:#777;"></div>
<div class="a" style="left:455.155px;top:172px;width:1px;height:1px;background:#888;"></div>
<div class="t" style="left:457.40000000000003px;top:169.44px;font-size:5.6px;line-height:6.44px;color:#555">10</div>
<div class="a" style="left:465.445px;top:172px;width:1px;height:1px;background:#888;"></div>
<div class="a" style="left:470.89000000000004px;top:170.8px;width:0.7px;height:3px;background:#777;"></div>
<div class="a" style="left:475.735px;top:172px;width:1px;height:1px;background:#888;"></div>
<div class="t" style="left:477.98px;top:169.44px;font-size:5.6px;line-height:6.44px;color:#555">11</div>
<div class="a" style="left:486.025px;top:172px;width:1px;height:1px;background:#888;"></div>
<div class="a" style="left:491.47px;top:170.8px;width:0.7px;height:3px;background:#777;"></div>
<div class="a" style="left:496.315px;top:172px;width:1px;height:1px;background:#888;"></div>
<div class="t" style="left:498.56px;top:169.44px;font-size:5.6px;line-height:6.44px;color:#555">12</div>
<div class="a" style="left:506.60499999999996px;top:172px;width:1px;height:1px;background:#888;"></div>
<div class="a" style="left:512.05px;top:170.8px;width:0.7px;height:3px;background:#777;"></div>
<div class="a" style="left:516.895px;top:172px;width:1px;height:1px;background:#888;"></div>
<div class="t" style="left:519.1399999999999px;top:169.44px;font-size:5.6px;line-height:6.44px;color:#555">13</div>
<div class="a" style="left:527.185px;top:172px;width:1px;height:1px;background:#888;"></div>
<div class="a" style="left:532.6299999999999px;top:170.8px;width:0.7px;height:3px;background:#777;"></div>
<div class="a" style="left:537.4749999999999px;top:172px;width:1px;height:1px;background:#888;"></div>
<div class="t" style="left:539.72px;top:169.44px;font-size:5.6px;line-height:6.44px;color:#555">14</div>
<div class="a" style="left:547.7650000000001px;top:172px;width:1px;height:1px;background:#888;"></div>
<div class="a" style="left:553.21px;top:170.8px;width:0.7px;height:3px;background:#777;"></div>
<div class="a" style="left:558.0550000000001px;top:172px;width:1px;height:1px;background:#888;"></div>
<div class="t" style="left:560.3px;top:169.44px;font-size:5.6px;line-height:6.44px;color:#555">15</div>
<div class="a" style="left:568.345px;top:172px;width:1px;height:1px;background:#888;"></div>
<div class="a" style="left:573.79px;top:170.8px;width:0.7px;height:3px;background:#777;"></div>
<div class="a" style="left:578.635px;top:172px;width:1px;height:1px;background:#888;"></div>
<div class="a" style="left:588.925px;top:172px;width:1px;height:1px;background:#888;"></div>
<div class="a" style="left:594.3699999999999px;top:170.8px;width:0.7px;height:3px;background:#777;"></div>
<div class="a" style="left:599.2149999999999px;top:172px;width:1px;height:1px;background:#888;"></div>
<div class="t" style="left:601.4599999999999px;top:169.44px;font-size:5.6px;line-height:6.44px;color:#555">17</div>
<div class="a" style="left:609.505px;top:172px;width:1px;height:1px;background:#888;"></div>
<div class="a" style="left:614.9499999999999px;top:170.8px;width:0.7px;height:3px;background:#777;"></div>
<div class="a" style="left:619.795px;top:172px;width:1px;height:1px;background:#888;"></div>
<div class="t" style="left:622.04px;top:169.44px;font-size:5.6px;line-height:6.44px;color:#555">18</div>
<div class="a" style="left:630.085px;top:172px;width:1px;height:1px;background:#888;"></div>
<svg class="a" style="left:251px;top:167.5px" width="8" height="13" viewBox="0 0 8 13"><path d="M0.5 0.5h7L4 4z" fill="#fff" stroke="#888" stroke-width="0.6"/><path d="M0.5 8.5L4 5l3.5 3.5z" fill="#fff" stroke="#888" stroke-width="0.6"/><rect x="0.5" y="9" width="7" height="3" fill="#fff" stroke="#888" stroke-width="0.6"/></svg>
<svg class="a" style="left:578px;top:171.5px" width="7" height="5" viewBox="0 0 7 5"><path d="M0.5 4.5L3.5 0.8l3 3.7z" fill="#fff" stroke="#888" stroke-width="0.6"/></svg>
<div class="a" style="left:204px;top:179.5px;width:429px;height:334.5px;background:#fff;"></div>
<div class="t" style="left:255px;top:181.46px;font-size:8.02px;line-height:9.22px;color:#111;font-family:'Liberation Serif',serif;-webkit-text-stroke:0.1px #333">Kutipan langsung :</div>
<div class="a" style="left:255px;top:189.2px;width:61px;height:0.5px;background:#666;"></div>
<svg class="a" style="left:255px;top:189.2px" width="61" height="2" viewBox="0 0 61 2"><path d="M0 1 l1 -0.8 l1 0.8 l1 -0.8 l1 0.8 l1 -0.8 l1 0.8 l1 -0.8 l1 0.8 l1 -0.8 l1 0.8 l1 -0.8 l1 0.8 l1 -0.8 l1 0.8 l1 -0.8 l1 0.8 l1 -0.8 l1 0.8 l1 -0.8 l1 0.8 l1 -0.8 l1 0.8 l1 -0.8 l1 0.8 l1 -0.8 l1 0.8" fill="none" stroke="#e86060" stroke-width="0.5"/><path d="M29 1 l1 -0.8 l1 0.8 l1 -0.8 l1 0.8 l1 -0.8 l1 0.8 l1 -0.8 l1 0.8 l1 -0.8 l1 0.8 l1 -0.8 l1 0.8 l1 -0.8 l1 0.8 l1 -0.8 l1 0.8 l1 -0.8 l1 0.8 l1 -0.8 l1 0.8 l1 -0.8 l1 0.8 l1 -0.8 l1 0.8 l1 -0.8 l1 0.8" fill="none" stroke="#e86060" stroke-width="0.5"/><path d="M57 1 h4" stroke="#3060d0" stroke-width="0.8"/></svg>
<div class="t" style="left:268.7px;top:213.36px;font-size:8.02px;line-height:9.22px;color:#111;font-family:'Liberation Serif',serif;-webkit-text-stroke:0.1px #333">1.</div>
<div class="t" style="left:281.4px;top:213.36px;font-size:8.02px;line-height:9.22px;color:#111;font-family:'Liberation Serif',serif;-webkit-text-stroke:0.1px #333">Overall, the review of previous studies indicates the lack of studies that relate to the</div>
<div class="t" style="left:281.4px;top:223.06px;font-size:8.02px;line-height:9.22px;color:#111;font-family:'Liberation Serif',serif;-webkit-text-stroke:0.1px #333">mediating effects of the exchange quality and multifocal trust. (<span style="font-family:Liberation Sans,sans-serif;font-size:7.3px;letter-spacing:-0.1px;color:#4a4a4a;-webkit-text-stroke:0">Waskito dan Linansya</span></div>
<div class="t" style="left:281.4px;top:233.56px;font-size:8.02px;line-height:9.22px;color:#111;font-family:'Liberation Serif',serif;-webkit-text-stroke:0.1px #333">2022:88)</div>
<div class="t" style="left:268.7px;top:243.96px;font-size:8.02px;line-height:9.22px;color:#111;font-family:'Liberation Serif',serif;-webkit-text-stroke:0.1px #333">2.</div>
<div class="t" style="left:281.4px;top:243.96px;font-size:8.02px;line-height:9.22px;color:#111;font-family:'Liberation Serif',serif;-webkit-text-stroke:0.1px #333">Waskito dan Linansya (2022:88) menjelaskan Overall, the review of previous studies</div>
<div class="t" style="left:281.4px;top:253.96px;font-size:8.02px;line-height:9.22px;color:#111;font-family:'Liberation Serif',serif;-webkit-text-stroke:0.1px #333">indicates the lack of studies that relate to the mediating effects of the exchange quality and</div>
<div class="t" style="left:281.4px;top:263.86px;font-size:8.02px;line-height:9.22px;color:#111;font-family:'Liberation Serif',serif;-webkit-text-stroke:0.1px #333">multifocal trust.</div>
<div class="t" style="left:268.7px;top:273.86px;font-size:8.02px;line-height:9.22px;color:#111;font-family:'Liberation Serif',serif;-webkit-text-stroke:0.1px #333">3.</div>
<div class="t" style="left:281.4px;top:273.86px;font-size:8.02px;line-height:9.22px;color:#111;font-family:'Liberation Serif',serif;-webkit-text-stroke:0.1px #333">Menurut Waskito dan Linansya (2022:88)Overall, the review of previous studies indicates the</div>
<div class="t" style="left:281.4px;top:283.56px;font-size:8.02px;line-height:9.22px;color:#111;font-family:'Liberation Serif',serif;-webkit-text-stroke:0.1px #333">lack of studies that relate to the mediating effects of the exchange quality and multifocal trust.</div>
<div class="a" style="left:281.4px;top:252.2px;width:26px;height:0.5px;background:#777;"></div>
<svg class="a" style="left:281.4px;top:251.9px" width="26" height="2" viewBox="0 0 26 2"><path d="M0 1 l1 -0.8 l1 0.8 l1 -0.8 l1 0.8 l1 -0.8 l1 0.8 l1 -0.8 l1 0.8 l1 -0.8 l1 0.8 l1 -0.8 l1 0.8 l1 -0.8 l1 0.8 l1 -0.8 l1 0.8 l1 -0.8 l1 0.8 l1 -0.8 l1 0.8 l1 -0.8 l1 0.8 l1 -0.8 l1 0.8 l1 -0.8 l1 0.8 l1 -0.8 l1 0.8" fill="none" stroke="#e86060" stroke-width="0.5"/></svg>
<div class="a" style="left:324px;top:252.2px;width:30px;height:0.5px;background:#777;"></div>
<svg class="a" style="left:324px;top:251.9px" width="30" height="2" viewBox="0 0 30 2"><path d="M0 1 l1 -0.8 l1 0.8 l1 -0.8 l1 0.8 l1 -0.8 l1 0.8 l1 -0.8 l1 0.8 l1 -0.8 l1 0.8 l1 -0.8 l1 0.8 l1 -0.8 l1 0.8 l1 -0.8 l1 0.8 l1 -0.8 l1 0.8 l1 -0.8 l1 0.8 l1 -0.8 l1 0.8 l1 -0.8 l1 0.8 l1 -0.8 l1 0.8 l1 -0.8 l1 0.8 l1 -0.8 l1 0.8 l1 -0.8 l1 0.8" fill="none" stroke="#e86060" stroke-width="0.5"/></svg>
<svg class="a" style="left:388px;top:251.9px" width="40" height="2" viewBox="0 0 40 2"><path d="M0 1 l1 -0.8 l1 0.8 l1 -0.8 l1 0.8 l1 -0.8 l1 0.8 l1 -0.8 l1 0.8 l1 -0.8 l1 0.8 l1 -0.8 l1 0.8 l1 -0.8 l1 0.8 l1 -0.8 l1 0.8 l1 -0.8 l1 0.8 l1 -0.8 l1 0.8 l1 -0.8 l1 0.8 l1 -0.8 l1 0.8 l1 -0.8 l1 0.8 l1 -0.8 l1 0.8 l1 -0.8 l1 0.8 l1 -0.8 l1 0.8 l1 -0.8 l1 0.8 l1 -0.8 l1 0.8 l1 -0.8 l1 0.8 l1 -0.8 l1 0.8 l1 -0.8 l1 0.8" fill="none" stroke="#e86060" stroke-width="0.5"/></svg>
<div class="a" style="left:281.4px;top:282.1px;width:26px;height:0.5px;background:#777;"></div>
<svg class="a" style="left:281.4px;top:281.8px" width="26" height="2" viewBox="0 0 26 2"><path d="M0 1 l1 -0.8 l1 0.8 l1 -0.8 l1 0.8 l1 -0.8 l1 0.8 l1 -0.8 l1 0.8 l1 -0.8 l1 0.8 l1 -0.8 l1 0.8 l1 -0.8 l1 0.8 l1 -0.8 l1 0.8 l1 -0.8 l1 0.8 l1 -0.8 l1 0.8 l1 -0.8 l1 0.8 l1 -0.8 l1 0.8 l1 -0.8 l1 0.8 l1 -0.8 l1 0.8" fill="none" stroke="#e86060" stroke-width="0.5"/></svg>
<div class="a" style="left:311px;top:282.1px;width:29px;height:0.5px;background:#777;"></div>
<svg class="a" style="left:311px;top:281.8px" width="29" height="2" viewBox="0 0 29 2"><path d="M0 1 l1 -0.8 l1 0.8 l1 -0.8 l1 0.8 l1 -0.8 l1 0.8 l1 -0.8 l1 0.8 l1 -0.8 l1 0.8 l1 -0.8 l1 0.8 l1 -0.8 l1 0.8 l1 -0.8 l1 0.8 l1 -0.8 l1 0.8 l1 -0.8 l1 0.8 l1 -0.8 l1 0.8 l1 -0.8 l1 0.8 l1 -0.8 l1 0.8 l1 -0.8 l1 0.8 l1 -0.8 l1 0.8" fill="none" stroke="#e86060" stroke-width="0.5"/></svg>
<div class="a" style="left:351px;top:282.1px;width:30px;height:0.5px;background:#777;"></div>
<svg class="a" style="left:351px;top:281.8px" width="30" height="2" viewBox="0 0 30 2"><path d="M0 1 l1 -0.8 l1 0.8 l1 -0.8 l1 0.8 l1 -0.8 l1 0.8 l1 -0.8 l1 0.8 l1 -0.8 l1 0.8 l1 -0.8 l1 0.8 l1 -0.8 l1 0.8 l1 -0.8 l1 0.8 l1 -0.8 l1 0.8 l1 -0.8 l1 0.8 l1 -0.8 l1 0.8 l1 -0.8 l1 0.8 l1 -0.8 l1 0.8 l1 -0.8 l1 0.8 l1 -0.8 l1 0.8 l1 -0.8 l1 0.8" fill="none" stroke="#e86060" stroke-width="0.5"/></svg>
<svg class="a" style="left:526px;top:231.4px" width="29" height="2" viewBox="0 0 29 2"><path d="M0 1 l1 -0.8 l1 0.8 l1 -0.8 l1 0.8 l1 -0.8 l1 0.8 l1 -0.8 l1 0.8 l1 -0.8 l1 0.8 l1 -0.8 l1 0.8 l1 -0.8 l1 0.8 l1 -0.8 l1 0.8 l1 -0.8 l1 0.8 l1 -0.8 l1 0.8 l1 -0.8 l1 0.8 l1 -0.8 l1 0.8 l1 -0.8 l1 0.8 l1 -0.8 l1 0.8 l1 -0.8 l1 0.8" fill="none" stroke="#e86060" stroke-width="0.5"/></svg>
<svg class="a" style="left:484px;top:231.4px" width="26" height="2" viewBox="0 0 26 2"><path d="M0 1 l1 -0.8 l1 0.8 l1 -0.8 l1 0.8 l1 -0.8 l1 0.8 l1 -0.8 l1 0.8 l1 -0.8 l1 0.8 l1 -0.8 l1 0.8 l1 -0.8 l1 0.8 l1 -0.8 l1 0.8 l1 -0.8 l1 0.8 l1 -0.8 l1 0.8 l1 -0.8 l1 0.8 l1 -0.8 l1 0.8 l1 -0.8 l1 0.8 l1 -0.8 l1 0.8" fill="none" stroke="#e86060" stroke-width="0.5"/></svg>
<div class="t" style="left:255.5px;top:315.46px;font-size:8.02px;line-height:9.22px;color:#111;font-family:'Liberation Serif',serif;-webkit-text-stroke:0.1px #333">Video provides a powerful way to help you prove your point. When you click Online Video, you can</div>
<div class="t" style="left:255.5px;top:325.56px;font-size:8.02px;line-height:9.22px;color:#111;font-family:'Liberation Serif',serif;-webkit-text-stroke:0.1px #333">paste in the embed code for the video you want to add. You can also type a keyword to search online</div>
<div class="t" style="left:255.5px;top:335.36px;font-size:8.02px;line-height:9.22px;color:#111;font-family:'Liberation Serif',serif;-webkit-text-stroke:0.1px #333">for the video that best fits your document. (McPherson 2010:23)</div>
<div class="t" style="left:255.5px;top:381.66px;font-size:8.02px;line-height:9.22px;color:#111;font-family:'Liberation Serif',serif;-webkit-text-stroke:0.1px #333">To make your document look professionally produced, Word provides header, footer, cover page, and</div>
<div class="t" style="left:255.5px;top:391.46px;font-size:8.02px;line-height:9.22px;color:#111;font-family:'Liberation Serif',serif;-webkit-text-stroke:0.1px #333">text box designs that complement each other. For example, you can add a matching cover page,</div>
<div class="t" style="left:255.5px;top:401.36px;font-size:8.02px;line-height:9.22px;color:#111;font-family:'Liberation Serif',serif;-webkit-text-stroke:0.1px #333">header, and sidebar. Click Insert and then choose the elements you want from the different galleries.</div>
<div class="a" style="left:738px;top:166px;width:191px;height:348px;background:#e6e6e6;"></div>
<div class="a" style="left:738.2px;top:166px;width:0.8px;height:348px;background:#d2d2d2;"></div>
<div class="t" style="left:745.7px;top:173.19px;font-size:11.3px;line-height:12.99px;color:#4670aa;letter-spacing:-0.05px">Mendeley Cite</div>
<svg class="a" style="left:892px;top:177px" width="6" height="4" viewBox="0 0 6 4"><path d="M0 0h5.5L2.75 3z" fill="#666"/></svg>
<svg class="a" style="left:913.5px;top:175.5px" width="6" height="6" viewBox="0 0 6 6"><path d="M0.4 0.4l5.2 5.2M5.6 0.4L0.4 5.6" stroke="#666" stroke-width="0.85"/></svg>
<div class="a" style="left:745.7px;top:191px;width:176.3px;height:315.5px;background:#fff;"></div>
<div class="t" style="left:750.6px;top:196.72px;font-size:7.9px;line-height:9.08px;color:#333;font-weight:bold;letter-spacing:-0.2px">References</div>
<div class="t" style="left:807px;top:196.72px;font-size:7.9px;line-height:9.08px;color:#444;letter-spacing:-0.12px">Citation Settings</div>
<svg class="a" style="left:892px;top:201.5px" width="9" height="2" viewBox="0 0 9 2"><circle cx="1" cy="1" r="0.75" fill="#555"/><circle cx="4.3" cy="1" r="0.75" fill="#555"/><circle cx="7.6" cy="1" r="0.75" fill="#555"/></svg>
<div class="a" style="left:745.7px;top:212px;width:176.3px;height:0.7px;background:#ececec;"></div>
<div class="a" style="left:745.7px;top:211.2px;width:49.5px;height:1.5px;background:#5a5a5a;"></div>
<div class="a" style="left:757px;top:224px;width:154px;height:16.5px;background:#fff;border:0.8px solid #b8b8b8;border-radius:1px"></div>
<div class="t" style="left:765.8px;top:229.29px;font-size:7.5px;line-height:8.62px;color:#333;letter-spacing:-0.1px">All References</div>
<svg class="a" style="left:895.5px;top:227.5px" width="5" height="9" viewBox="0 0 5 9"><path d="M0.5 3.2L2.5 1 4.5 3.2M0.5 5.8L2.5 8 4.5 5.8" fill="none" stroke="#2b5fb0" stroke-width="0.9"/></svg>
<div class="a" style="left:757px;top:252px;width:154px;height:16.7px;background:#f4f4f4;"></div>
<svg class="a" style="left:763px;top:256px" width="9" height="9" viewBox="0 0 9 9"><circle cx="5.5" cy="3.5" r="2.8" fill="none" stroke="#999" stroke-width="0.8"/><path d="M3.5 5.5L0.8 8.2" stroke="#999" stroke-width="0.9"/></svg>
<div class="t" style="left:776.5px;top:257.48px;font-size:7.3px;line-height:8.39px;color:#9a9a9a;letter-spacing:-0.05px">Search for references to add...</div>
<div class="a" style="left:757px;top:279.5px;width:145px;height:11.5px;background:linear-gradient(90deg,#f2f2f2,#ededed 40%,#f3f3f3 60%,#f0f0f0);"></div>
<div class="a" style="left:757px;top:294.7px;width:116px;height:7.3px;background:linear-gradient(90deg,#f1f1f1,#ececec 50%,#f2f2f2);"></div>
<div class="a" style="left:757px;top:304.7px;width:130px;height:5.3px;background:#f1f1f1;"></div>
<div class="a" style="left:757px;top:318.55px;width:145px;height:11.5px;background:linear-gradient(90deg,#f2f2f2,#ededed 40%,#f3f3f3 60%,#f0f0f0);"></div>
<div class="a" style="left:757px;top:333.75px;width:116px;height:7.3px;background:linear-gradient(90deg,#f1f1f1,#ececec 50%,#f2f2f2);"></div>
<div class="a" style="left:757px;top:343.75px;width:130px;height:5.3px;background:#f1f1f1;"></div>
<div class="a" style="left:757px;top:357.6px;width:145px;height:11.5px;background:linear-gradient(90deg,#f2f2f2,#ededed 40%,#f3f3f3 60%,#f0f0f0);"></div>
<div class="a" style="left:757px;top:372.8px;width:116px;height:7.3px;background:linear-gradient(90deg,#f1f1f1,#ececec 50%,#f2f2f2);"></div>
<div class="a" style="left:757px;top:382.8px;width:130px;height:5.3px;background:#f1f1f1;"></div>
<div class="a" style="left:757px;top:396.65px;width:145px;height:11.5px;background:linear-gradient(90deg,#f2f2f2,#ededed 40%,#f3f3f3 60%,#f0f0f0);"></div>
<div class="a" style="left:757px;top:411.84999999999997px;width:116px;height:7.3px;background:linear-gradient(90deg,#f1f1f1,#ececec 50%,#f2f2f2);"></div>
<div class="a" style="left:757px;top:421.84999999999997px;width:130px;height:5.3px;background:#f1f1f1;"></div>
<div class="a" style="left:757px;top:435.7px;width:145px;height:11.5px;background:linear-gradient(90deg,#f2f2f2,#ededed 40%,#f3f3f3 60%,#f0f0f0);"></div>
<div class="a" style="left:757px;top:450.9px;width:116px;height:7.3px;background:linear-gradient(90deg,#f1f1f1,#ececec 50%,#f2f2f2);"></div>
<div class="a" style="left:757px;top:460.9px;width:130px;height:5.3px;background:#f1f1f1;"></div>
<div class="a" style="left:757px;top:474.75px;width:145px;height:11.5px;background:linear-gradient(90deg,#f2f2f2,#ededed 40%,#f3f3f3 60%,#f0f0f0);"></div>
<div class="a" style="left:757px;top:489.95px;width:116px;height:7.3px;background:linear-gradient(90deg,#f1f1f1,#ececec 50%,#f2f2f2);"></div>
<div class="a" style="left:757px;top:499.95px;width:130px;height:5.3px;background:#f1f1f1;"></div>
<div class="a" style="left:745.7px;top:506.2px;width:177px;height:7.8px;background:#f9f9f9;border-top:0.8px solid #e2e2e2"></div>
<div class="a" style="left:912.5px;top:279px;width:9.5px;height:227px;background:#fff;"></div>
<div class="a" style="left:913px;top:296px;width:7.5px;height:110px;background:#cfcfcf;"></div>
<svg class="a" style="left:913px;top:286px" width="8" height="5" viewBox="0 0 8 5"><path d="M0.8 4L3.8 1 6.8 4" fill="none" stroke="#555" stroke-width="0.95"/></svg>
<svg class="a" style="left:913px;top:491.5px" width="8" height="5" viewBox="0 0 8 5"><path d="M0.8 1L3.8 4 6.8 1" fill="none" stroke="#555" stroke-width="0.95"/></svg>
<svg class="a" style="left:867px;top:282px" width="6" height="9" viewBox="0 0 6 9"><path d="M0.5 0.5v7l1.8-1.6 1.3 2.8 1-0.5-1.3-2.7h2.4z" fill="#fff" stroke="#333" stroke-width="0.6"/></svg>
<div class="a" style="left:0px;top:514px;width:1024px;height:35px;background:#1a1a1a;"></div>
<svg class="a" style="left:23px;top:517px" width="17" height="16" viewBox="0 0 17 16"><path d="M6 2a2.5 2.5 0 0 1 5 0v6a2.5 2.5 0 0 1-5 0z" fill="#bdbdbd"/><path d="M3.5 7a5 5 0 0 0 10 0M8.5 12v2.5M6 14.5h5" fill="none" stroke="#bdbdbd" stroke-width="1"/><path d="M1 15L16 1" stroke="#e0302e" stroke-width="1.2"/></svg>
<div class="t" style="left:16px;top:537.95px;font-size:8.3px;line-height:9.54px;color:#d6d6d6;letter-spacing:-0.1px">Unmute</div>
<svg class="a" style="left:49.0px;top:523.5px" width="5" height="3" viewBox="0 0 5 3"><path d="M0.5 2.6L2.5 0.6 4.5 2.6" fill="none" stroke="#c8c8c8" stroke-width="0.9"/></svg>
<svg class="a" style="left:85px;top:521px" width="17" height="10" viewBox="0 0 17 10"><rect x="0" y="0" width="11" height="10" rx="2" fill="#c4c4c4"/><path d="M11.5 3.5L16.5 0.5v9l-5-3z" fill="#c4c4c4"/></svg>
<div class="t" style="left:73px;top:537.95px;font-size:8.3px;line-height:9.54px;color:#d6d6d6;letter-spacing:-0.1px">Stop Video</div>
<svg class="a" style="left:114.5px;top:523.5px" width="5" height="3" viewBox="0 0 5 3"><path d="M0.5 2.6L2.5 0.6 4.5 2.6" fill="none" stroke="#c8c8c8" stroke-width="0.9"/></svg>
<svg class="a" style="left:220px;top:518.5px" width="12" height="15" viewBox="0 0 12 15"><path d="M6 0.5L11.5 2.5v5c0 3.5-2.5 6-5.5 7-3-1-5.5-3.5-5.5-7v-5z" fill="#c8c8c8"/><path d="M6 1.5v12.5c-2.5-1-4.5-3-4.5-6.5V3.2z" fill="#1a1a1a" opacity="0"/><path d="M6 7.5V1.8l4.5 1.6v4.1zM6 7.5H1.5c0.2 3 2 5 4.5 6z" fill="#2a2a2a"/></svg>
<div class="t" style="left:212px;top:537.95px;font-size:8.3px;line-height:9.54px;color:#d6d6d6;letter-spacing:-0.1px">Security</div>
<svg class="a" style="left:288.5px;top:520px" width="18" height="14" viewBox="0 0 18 14"><circle cx="5" cy="3.5" r="3" fill="#c4c4c4"/><path d="M0 13c0-4 2-6 5-6s5 2 5 6z" fill="#c4c4c4"/><circle cx="12.5" cy="4" r="2.8" fill="#c4c4c4"/><path d="M8 13c0-3.5 1.8-5.5 4.5-5.5S17 9.5 17 13z" fill="#c4c4c4"/></svg>
<div class="t" style="left:307.5px;top:520.88px;font-size:8.6px;line-height:9.89px;color:#cfcfcf;letter-spacing:-0.2px">95</div>
<div class="t" style="left:275.5px;top:537.95px;font-size:8.3px;line-height:9.54px;color:#d6d6d6;letter-spacing:-0.1px">Participants</div>
<svg class="a" style="left:329.0px;top:523.5px" width="5" height="3" viewBox="0 0 5 3"><path d="M0.5 2.6L2.5 0.6 4.5 2.6" fill="none" stroke="#c8c8c8" stroke-width="0.9"/></svg>
<svg class="a" style="left:362px;top:519px" width="16" height="14" viewBox="0 0 16 14"><path d="M1 1.5h13.5v9H6L2.5 13.5V10.5H1z" fill="#c4c4c4"/></svg>
<svg class="a" style="left:371.5px;top:515.5px" width="11" height="11" viewBox="0 0 11 11"><circle cx="5.5" cy="5.5" r="5" fill="#e02d2d"/><text x="5.5" y="8.2" font-size="7.5" fill="#fff" text-anchor="middle" font-family="Liberation Sans" font-weight="bold">1</text></svg>
<div class="t" style="left:362px;top:537.95px;font-size:8.3px;line-height:9.54px;color:#d6d6d6;letter-spacing:-0.1px">Chat</div>
<svg class="a" style="left:389.5px;top:523.5px" width="5" height="3" viewBox="0 0 5 3"><path d="M0.5 2.6L2.5 0.6 4.5 2.6" fill="none" stroke="#c8c8c8" stroke-width="0.9"/></svg>
<div class="a" style="left:425px;top:520px;width:16px;height:11.5px;background:#23c552;border-radius:2px"></div>
<svg class="a" style="left:429px;top:522px" width="8" height="8" viewBox="0 0 8 8"><path d="M4 7.5V1.5M1.3 4L4 1.3 6.7 4" fill="none" stroke="#111" stroke-width="1.2"/></svg>
<div class="t" style="left:409.7px;top:537.95px;font-size:8.3px;line-height:9.54px;color:#2fd05e;letter-spacing:-0.1px">Share Screen</div>
<svg class="a" style="left:454.7px;top:523.5px" width="5" height="3" viewBox="0 0 5 3"><path d="M0.5 2.6L2.5 0.6 4.5 2.6" fill="none" stroke="#c8c8c8" stroke-width="0.9"/></svg>
<svg class="a" style="left:485px;top:518px" width="17" height="16" viewBox="0 0 17 16"><circle cx="7.5" cy="8" r="6" fill="none" stroke="#c8c8c8" stroke-width="1.2"/><circle cx="7.5" cy="8" r="3" fill="#c8c8c8"/><circle cx="11" cy="7.5" r="5.5" fill="#e02d2d"/><path d="M11 4.3v4" stroke="#fff" stroke-width="1.3"/><circle cx="11" cy="10.1" r="0.7" fill="#fff"/></svg>
<div class="t" style="left:480px;top:537.95px;font-size:8.3px;line-height:9.54px;color:#d6d6d6;letter-spacing:-0.1px">Record</div>
<div class="a" style="left:543px;top:520px;width:17.5px;height:12px;background:#c4c4c4;border-radius:2px"></div>
<div class="t" style="left:545.8px;top:523.10px;font-size:6.4px;line-height:7.36px;color:#2a2a2a;font-weight:bold;letter-spacing:-0.2px">CC</div>
<div class="t" style="left:524px;top:537.95px;font-size:8.3px;line-height:9.54px;color:#d6d6d6;letter-spacing:-0.1px">Show Captions</div>
<svg class="a" style="left:572.5px;top:523.5px" width="5" height="3" viewBox="0 0 5 3"><path d="M0.5 2.6L2.5 0.6 4.5 2.6" fill="none" stroke="#c8c8c8" stroke-width="0.9"/></svg>
<svg class="a" style="left:611px;top:519px" width="15" height="15" viewBox="0 0 15 15"><rect x="0" y="0" width="6.5" height="6.5" rx="1" fill="#c4c4c4"/><rect x="8" y="0" width="6.5" height="6.5" rx="1" fill="#c4c4c4"/><rect x="0" y="8" width="6.5" height="6.5" rx="1" fill="#c4c4c4"/><rect x="8" y="8" width="6.5" height="6.5" rx="1" fill="#c4c4c4"/></svg>
<div class="t" style="left:589px;top:537.95px;font-size:8.3px;line-height:9.54px;color:#d6d6d6;letter-spacing:-0.1px">Breakout Rooms</div>
<svg class="a" style="left:673px;top:518px" width="14" height="14" viewBox="0 0 14 14"><circle cx="6" cy="8" r="5.3" fill="#c4c4c4"/><circle cx="4.2" cy="7" r="0.8" fill="#1a1a1a"/><circle cx="7.8" cy="7" r="0.8" fill="#1a1a1a"/><path d="M3.5 9.3c1 1.5 4 1.5 5 0" fill="none" stroke="#1a1a1a" stroke-width="0.9"/><path d="M11 0.5v4.5M8.8 2.8h4.5" stroke="#c4c4c4" stroke-width="1"/></svg>
<div class="t" style="left:663px;top:537.95px;font-size:8.3px;line-height:9.54px;color:#d6d6d6;letter-spacing:-0.1px">Reactions</div>
<svg class="a" style="left:696.5px;top:523.5px" width="5" height="3" viewBox="0 0 5 3"><path d="M0.5 2.6L2.5 0.6 4.5 2.6" fill="none" stroke="#c8c8c8" stroke-width="0.9"/></svg>
<svg class="a" style="left:727px;top:519px" width="14" height="14" viewBox="0 0 14 14"><path d="M4.5 1H2a1 1 0 0 0-1 1v2.5M1 9.5V12a1 1 0 0 0 1 1h2.5M9.5 13H12a1 1 0 0 0 1-1V9.5" fill="none" stroke="#c4c4c4" stroke-width="1.1"/><circle cx="10.5" cy="3.5" r="2.3" fill="none" stroke="#c4c4c4" stroke-width="1.1"/><rect x="3.5" y="6.5" width="3.5" height="3.5" rx="0.5" fill="none" stroke="#c4c4c4" stroke-width="1"/></svg>
<div class="t" style="left:725px;top:537.95px;font-size:8.3px;line-height:9.54px;color:#d6d6d6;letter-spacing:-0.1px">Apps</div>
<svg class="a" style="left:750.0px;top:523.5px" width="5" height="3" viewBox="0 0 5 3"><path d="M0.5 2.6L2.5 0.6 4.5 2.6" fill="none" stroke="#c8c8c8" stroke-width="0.9"/></svg>
<svg class="a" style="left:786px;top:519px" width="15" height="13" viewBox="0 0 15 13"><rect x="0.6" y="0.6" width="13" height="10" rx="1.5" fill="none" stroke="#c4c4c4" stroke-width="1.1"/><rect x="6" y="8" width="8.5" height="4.5" rx="1" fill="#c4c4c4"/></svg>
<div class="t" style="left:770px;top:537.95px;font-size:8.3px;line-height:9.54px;color:#d6d6d6;letter-spacing:-0.1px">Whiteboards</div>
<svg class="a" style="left:814.5px;top:523.5px" width="5" height="3" viewBox="0 0 5 3"><path d="M0.5 2.6L2.5 0.6 4.5 2.6" fill="none" stroke="#c8c8c8" stroke-width="0.9"/></svg>
<svg class="a" style="left:847px;top:524px" width="15" height="3" viewBox="0 0 15 3"><circle cx="1.5" cy="1.5" r="1.4" fill="#c4c4c4"/><circle cx="7.5" cy="1.5" r="1.4" fill="#c4c4c4"/><circle cx="13.5" cy="1.5" r="1.4" fill="#c4c4c4"/></svg>
<div class="t" style="left:844px;top:537.95px;font-size:8.3px;line-height:9.54px;color:#d6d6d6;letter-spacing:-0.1px">More</div>
<div class="a" style="left:975px;top:522.6px;width:41px;height:18.2px;background:#bd2626;border-radius:4px"></div>
<div class="t" style="left:988.6px;top:527.52px;font-size:7.9px;line-height:9.08px;color:#fff;font-weight:bold;letter-spacing:-0.1px">End</div>
<div class="a" style="left:0px;top:549px;width:1024px;height:27px;background:linear-gradient(90deg,#243a45 0%,#233a45 25%,#1f3043 63%,#1d2a48 100%);"></div>
<div class="a" style="left:1020px;top:549px;width:1px;height:27px;background:#3a4662;"></div>
<svg class="a" style="left:10.6px;top:557.2px" width="11" height="11" viewBox="0 0 11 11"><path d="M0 1.5L4.5 0.9V5.1H0zM5.2 0.8L10.6 0V5.1H5.2zM0 5.8H4.5V10L0 9.4zM5.2 5.8H10.6V10.6L5.2 9.9z" fill="#fff"/></svg>
<div class="a" style="left:32px;top:549px;width:192px;height:27px;background:#f0f0f0;"></div>
<svg class="a" style="left:40px;top:556px" width="11" height="11" viewBox="0 0 11 11"><circle cx="6.8" cy="4.2" r="3.6" fill="none" stroke="#333" stroke-width="1.1"/><path d="M4.2 6.8L0.8 10.2" stroke="#333" stroke-width="1.2"/></svg>
<div class="t" style="left:58.8px;top:558.17px;font-size:9.8px;line-height:11.27px;color:#333;letter-spacing:-0.05px">Type here to search</div>
<svg class="a" style="left:234px;top:557px" width="12" height="12" viewBox="0 0 12 12"><rect x="2" y="2.5" width="7" height="7" fill="none" stroke="#ccc" stroke-width="1"/><path d="M0.5 2.5h10M0.5 9.5h10M11 0.5v11" stroke="#ccc" stroke-width="0.9"/></svg>
<div class="a" style="left:360px;top:574px;width:26px;height:2px;background:#8cc4ec;"></div>
<div class="a" style="left:393px;top:574px;width:26px;height:2px;background:#8cc4ec;"></div>
<div class="a" style="left:459px;top:574px;width:26px;height:2px;background:#8cc4ec;"></div>
<div class="a" style="left:492px;top:574px;width:26px;height:2px;background:#8cc4ec;"></div>
<div class="a" style="left:525px;top:574px;width:26px;height:2px;background:#8cc4ec;"></div>
<div class="a" style="left:558px;top:574px;width:26px;height:2px;background:#8cc4ec;"></div>
<div class="a" style="left:591px;top:574px;width:26px;height:2px;background:#8cc4ec;"></div>
<div class="a" style="left:624px;top:574px;width:26px;height:2px;background:#8cc4ec;"></div>
<div class="a" style="left:589px;top:549px;width:31px;height:27px;background:rgba(255,255,255,.14);"></div>
<svg class="a" style="left:264px;top:556px" width="18" height="14" viewBox="0 0 18 14"><path d="M9 0.5L17.5 6v7.5H0.5V6z" fill="#1d8fe0"/><path d="M0.5 6l8.5 5.5L17.5 6v7.5H0.5z" fill="#34a8f5"/><path d="M0.5 13.5L9 8l8.5 5.5" fill="#5bbcff"/></svg>
<svg class="a" style="left:298px;top:555px" width="16" height="16" viewBox="0 0 16 16"><path d="M5 4V2.5a3 3 0 0 1 6 0V4" fill="none" stroke="#2b8fd8" stroke-width="1.1"/><rect x="0.5" y="4" width="15" height="11.5" rx="1.5" fill="#f2f2f2"/><rect x="5" y="7" width="2.8" height="2.8" fill="#f25022"/><rect x="8.2" y="7" width="2.8" height="2.8" fill="#7fba00"/><rect x="5" y="10.2" width="2.8" height="2.8" fill="#00a4ef"/><rect x="8.2" y="10.2" width="2.8" height="2.8" fill="#ffb900"/></svg>
<svg class="a" style="left:332px;top:555px" width="17" height="17" viewBox="0 0 17 17"><circle cx="8.5" cy="8.5" r="8" fill="#1a7ad4"/><path d="M1 9C1 3 6 0.5 10 0.8c4 0.3 6.5 3.5 6.5 6.5 0 2-1.5 3-3.5 3H7.5c0 2.5 2.5 4 5.5 3.2C11 16 9.5 16.5 8 16.5 3.5 16 1 12.5 1 9z" fill="#3bc9e0"/><path d="M4.5 9c0-2 2-3.5 4-3.5 2.5 0 4.5 1.5 4.5 3.5H7" fill="#1a7ad4"/></svg>
<svg class="a" style="left:364px;top:556px" width="18" height="14" viewBox="0 0 18 14"><path d="M0.5 1.5h6l1.5 2h9.5v10H0.5z" fill="#f5c242"/><rect x="0.5" y="5" width="17" height="8.5" fill="#ffd866"/><rect x="5" y="8" width="8" height="5.5" fill="#2b88d8"/></svg>
<svg class="a" style="left:398px;top:555px" width="17" height="17" viewBox="0 0 17 17"><circle cx="8.5" cy="9" r="7.5" fill="#ff7139"/><circle cx="8.5" cy="9" r="4.5" fill="#7542e5"/><path d="M3 3c2-2.5 7-3 10-0.5 1 1 2.5 3 3 5.5-2-2.5-4-3-6-2.5z" fill="#ffbd2e"/></svg>
<svg class="a" style="left:431px;top:555px" width="17" height="17" viewBox="0 0 17 17"><circle cx="8.5" cy="8.5" r="8" fill="#1ed760"/><path d="M4 6.2c3-1 6.5-0.7 9 0.8M4.5 8.8c2.5-0.8 5.5-0.5 7.5 0.7M5 11.2c2-0.6 4.3-0.4 6 0.5" fill="none" stroke="#111" stroke-width="1.2" stroke-linecap="round"/></svg>
<svg class="a" style="left:464px;top:555px" width="18" height="17" viewBox="0 0 18 17"><circle cx="8.5" cy="8.5" r="8" fill="#db4437"/><path d="M8.5 8.5L1.6 4.5A8 8 0 0 0 4.5 15.4z" fill="#0f9d58"/><path d="M8.5 8.5L4.5 15.4A8 8 0 0 0 16.5 8.5z" fill="#ffcd40"/><circle cx="8.5" cy="8.5" r="3.6" fill="#fff"/><circle cx="8.5" cy="8.5" r="2.8" fill="#4285f4"/><circle cx="13.5" cy="12.5" r="4" fill="#1565c0"/><text x="13.5" y="14.6" font-size="5.5" fill="#fff" text-anchor="middle" font-family="Liberation Sans">L</text></svg>
<div class="a" style="left:497px;top:555px;width:16px;height:16px;background:#d2202f;"></div>
<svg class="a" style="left:498px;top:557px" width="14" height="12" viewBox="0 0 14 12"><g fill="#fff"><circle cx="5" cy="3.5" r="1.8"/><circle cx="9" cy="3.5" r="1.8"/><circle cx="2.5" cy="8" r="1.6"/><circle cx="7" cy="8" r="1.6"/><circle cx="11.5" cy="8" r="1.6"/></g><path d="M2.5 8L5 3.5 7 8 9 3.5 11.5 8" fill="none" stroke="#fff" stroke-width="1.1"/></svg>
<svg class="a" style="left:530px;top:555px" width="17" height="17" viewBox="0 0 17 17"><path d="M3 2l10-1.5 2.5 14L5 16z" fill="#cfe8f2" stroke="#7ab" stroke-width="0.6"/><path d="M2 4l10-1 1.5 12L3.5 16z" fill="#e9f6fb" stroke="#7ab" stroke-width="0.5"/><path d="M1 14l4 2.5 1-1.5z" fill="#5a8"/></svg>
<div class="a" style="left:563px;top:555px;width:16px;height:16px;background:#f4f4f4;"></div>
<svg class="a" style="left:564px;top:556px" width="14" height="14" viewBox="0 0 14 14"><path d="M2 12c2-3 4-7 4.5-10 0.3-1.5 1.5-1 1.2 0.5C7 6 10 9 12.5 9.5c1.2 0.2 1 1.2-0.3 1C9 10 5 11 2.5 12.8z" fill="none" stroke="#d4202a" stroke-width="1.1"/></svg>
<svg class="a" style="left:595.5px;top:555.5px" width="17" height="17" viewBox="0 0 17 17"><circle cx="8.5" cy="8.5" r="8.2" fill="#0b5cff"/><text x="8.5" y="10" font-size="3.8" fill="#fff" text-anchor="middle" font-family="Liberation Sans">zoom</text></svg>
<svg class="a" style="left:629px;top:555px" width="16" height="16" viewBox="0 0 16 16"><path d="M8 0.5l1.4 2.1 2.5-0.6 0.6 2.5 2.4 1-0.9 2.4 1.6 2-2.1 1.4 0.2 2.5-2.5 0.1-1 2.3-2.2-1.3-2.2 1.3-1-2.3-2.5-0.1 0.2-2.5L0.4 9.9l1.6-2-0.9-2.4 2.4-1 0.6-2.5 2.5 0.6z" fill="#fff"/><circle cx="8" cy="8.2" r="2.7" fill="#1c2c3a"/></svg>
<svg class="a" style="left:756px;top:555px" width="21" height="14" viewBox="0 0 21 14"><path d="M5 13a4.5 4.5 0 0 1 0-9c0.8-2.5 3-4 5.8-4 3.2 0 5.8 2.5 5.8 5.7A3.7 3.7 0 0 1 16.5 13z" fill="#dfe9f7"/><path d="M5 13a4.5 4.5 0 0 1 0-9c2 0 3 1 3.5 2" fill="#c6d6ee"/></svg>
<div class="t" style="left:779px;top:558.51px;font-size:9px;line-height:10.35px;color:#f2f2f2;letter-spacing:-0.1px">24°C</div>
<svg class="a" style="left:810.5px;top:559.5px" width="8" height="5" viewBox="0 0 8 5"><path d="M0.6 4.5L4 1l3.4 3.5" fill="none" stroke="#eee" stroke-width="1"/></svg>
<svg class="a" style="left:825.5px;top:556.5px" width="9" height="11" viewBox="0 0 9 11"><rect x="1" y="2" width="7" height="6.5" rx="1" fill="none" stroke="#ddd" stroke-width="0.9"/><path d="M3 0.5h3M4.5 8.5v2M2 10.5h5" stroke="#ddd" stroke-width="0.9"/></svg>
<svg class="a" style="left:839px;top:558px" width="14" height="9" viewBox="0 0 14 9"><path d="M3.5 8.5a3 3 0 0 1-0.3-6c0.5-1.5 2-2.5 3.8-2.5 2.3 0 4 1.6 4.2 3.7a2.4 2.4 0 0 1-0.2 4.8z" fill="#2a8ae6"/></svg>
<svg class="a" style="left:858.5px;top:555.5px" width="7" height="14" viewBox="0 0 7 14"><rect x="1" y="0.5" width="5" height="9" rx="2.5" fill="#eee"/><path d="M3.5 10v3M1 13.5h5" stroke="#eee" stroke-width="1"/></svg>
<svg class="a" style="left:873px;top:558.5px" width="12" height="8" viewBox="0 0 12 8"><rect x="1.5" y="0.5" width="10" height="7" fill="#eee"/><rect x="0" y="2.5" width="1.5" height="3" fill="#eee"/></svg>
<svg class="a" style="left:888.5px;top:557px" width="11" height="11" viewBox="0 0 11 11"><path d="M0.8 10.5A10 10 0 0 1 10.8 0.5M3.5 10.5a7.2 7.2 0 0 1 7.3-7.3M6.3 10.5a4.5 4.5 0 0 1 4.5-4.5" fill="none" stroke="#eee" stroke-width="0.9"/></svg>
<svg class="a" style="left:905px;top:556.5px" width="12" height="12" viewBox="0 0 12 12"><path d="M0.5 4h2.5l3-3v10l-3-3H0.5z" fill="none" stroke="#eee" stroke-width="0.9"/><path d="M8 3.5a3 3 0 0 1 0 5M9.8 2a5 5 0 0 1 0 8" fill="none" stroke="#eee" stroke-width="0.9"/></svg>
<svg class="a" style="left:920.5px;top:557px" width="17" height="12" viewBox="0 0 17 12"><rect x="0.5" y="0.5" width="17" height="11" fill="none" stroke="#ddd" stroke-width="0.9"/><path d="M2.5 3h1M5 3h1M7.5 3h1M10 3h1M12.5 3h1M15 3h0.8M2.5 5.5h1M5 5.5h1M7.5 5.5h1M10 5.5h1M12.5 5.5h1M15 5.5h0.8M4 8.5h9" stroke="#ddd" stroke-width="0.9"/></svg>
<div class="t" style="left:954.5px;top:552.60px;font-size:7.6px;line-height:8.74px;color:#f2f2f2;letter-spacing:-0.1px">17:24</div>
<div class="t" style="left:944px;top:563.63px;font-size:8px;line-height:9.2px;color:#f2f2f2;letter-spacing:-0.05px">25/02/2023</div>
<svg class="a" style="left:996px;top:555px" width="17" height="17" viewBox="0 0 17 17"><path d="M0.8 1.5h13.5v9.5H5.5L2.5 14V11H0.8z" fill="none" stroke="#eee" stroke-width="1"/><path d="M3.5 4.5h8M3.5 7h8" stroke="#eee" stroke-width="0.9"/><circle cx="11.5" cy="12" r="4.3" fill="#2a2a2a" stroke="#ddd" stroke-width="0.6"/><text x="11.5" y="14.3" font-size="6.2" fill="#fff" text-anchor="middle" font-family="Liberation Sans">5</text></svg>
</body></html>
